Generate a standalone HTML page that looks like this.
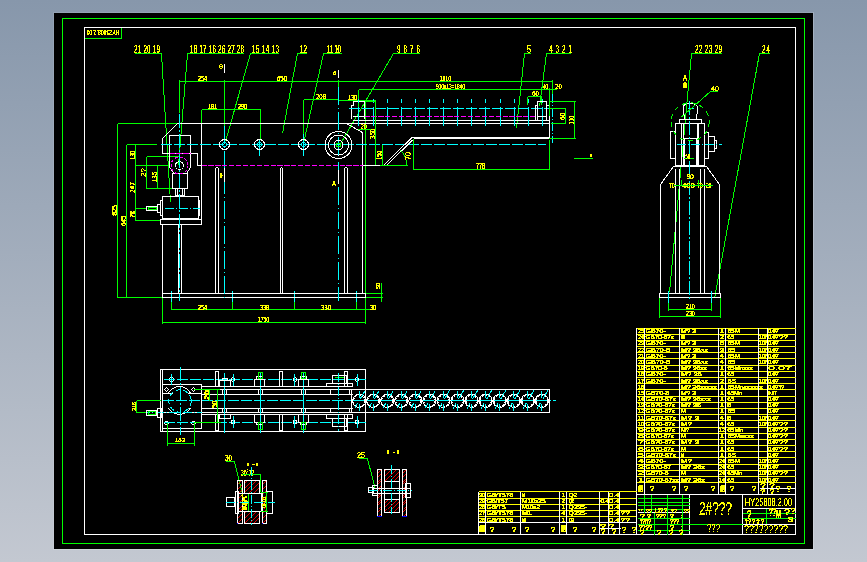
<!DOCTYPE html>
<html><head><meta charset="utf-8"><style>
html,body{margin:0;padding:0;width:867px;height:562px;overflow:hidden;background:linear-gradient(to bottom,#8797ab 0%,#c3c8d1 100%);}
svg{position:absolute;left:0;top:0;}
text{font-family:"Liberation Sans",sans-serif;filter:url(#th);} .tb text{filter:url(#th2);} .tb text.big{filter:url(#th3);}
</style></head><body>
<svg width="867" height="562" viewBox="0 0 867 562" shape-rendering="crispEdges">
<defs><filter id="th" x="-20%" y="-50%" width="140%" height="200%"><feComponentTransfer><feFuncA type="discrete" tableValues="0 0 1 1 1 1 1"/></feComponentTransfer></filter><filter id="th2" x="-20%" y="-50%" width="140%" height="200%"><feComponentTransfer><feFuncA type="discrete" tableValues="0 1 1 1 1 1 1"/></feComponentTransfer></filter><filter id="th3" x="-20%" y="-50%" width="140%" height="200%"><feComponentTransfer><feFuncA type="discrete" tableValues="0 0 0 1 1 1 1"/></feComponentTransfer></filter></defs>
<path d="M53.5 549 V12.5 H813" fill="none" stroke="#fff" stroke-opacity="0.1"/><path d="M813.5 12 V549.5 H53" fill="none" stroke="#fff" stroke-opacity="0.22"/>
<rect x="54" y="13" width="759" height="536" fill="#000"/>
<rect x="62.5" y="18.5" width="742" height="525" fill="none" stroke="#00ff00"/>
<rect x="84.5" y="27.5" width="711" height="507" fill="none" stroke="#fff"/>
<text transform="translate(119.5,30) rotate(180)" x="0" y="0" font-size="7.6" fill="#ff0" textLength="33" lengthAdjust="spacingAndGlyphs">HY25808.2.00</text>
<line x1="84.5" y1="38.5" x2="121.5" y2="38.5" stroke="#00ff00"/>
<line x1="121.5" y1="27.5" x2="121.5" y2="38.5" stroke="#00ff00"/>
<text transform="translate(134,53) scale(0.62,1)" x="0" y="0" font-size="10.15" fill="#ffff00" font-weight="normal" textLength="41.94" lengthAdjust="spacing">21 20 19</text>
<line x1="134.5" y1="53.5" x2="161.5" y2="53.5" stroke="#00ff00"/>
<line x1="161.5" y1="53.5" x2="170.5" y2="202.5" stroke="#00ff00"/>
<text transform="translate(190,53) scale(0.62,1)" x="0" y="0" font-size="10.15" fill="#ffff00" font-weight="normal" textLength="87.1" lengthAdjust="spacing">18 17 16 26 27 28</text>
<line x1="187.5" y1="53.5" x2="243.5" y2="53.5" stroke="#00ff00"/>
<line x1="187.5" y1="53.5" x2="178.5" y2="165.5" stroke="#00ff00"/>
<text transform="translate(252,53) scale(0.62,1)" x="0" y="0" font-size="10.15" fill="#ffff00" font-weight="normal" textLength="43.55" lengthAdjust="spacing">15 14 13</text>
<line x1="250.5" y1="53.5" x2="278.5" y2="53.5" stroke="#00ff00"/>
<line x1="250.5" y1="53.5" x2="225.5" y2="141.5" stroke="#00ff00"/>
<text transform="translate(300,53) scale(0.62,1)" x="0" y="0" font-size="10.15" fill="#ffff00" font-weight="normal" textLength="11.29" lengthAdjust="spacing">12</text>
<line x1="297.5" y1="53.5" x2="306.5" y2="53.5" stroke="#00ff00"/>
<line x1="297.5" y1="53.5" x2="282.5" y2="133.5" stroke="#00ff00"/>
<text transform="translate(327,53) scale(0.62,1)" x="0" y="0" font-size="10.15" fill="#ffff00" font-weight="normal" textLength="22.58" lengthAdjust="spacing">11 10</text>
<line x1="323.5" y1="53.5" x2="341.5" y2="53.5" stroke="#00ff00"/>
<line x1="323.5" y1="53.5" x2="303.5" y2="143.5" stroke="#00ff00"/>
<text transform="translate(397,53) scale(0.62,1)" x="0" y="0" font-size="10.15" fill="#ffff00" font-weight="normal" textLength="37.1" lengthAdjust="spacing">9 8 7 6</text>
<line x1="393.5" y1="53.5" x2="419.5" y2="53.5" stroke="#00ff00"/>
<line x1="393.5" y1="53.5" x2="339.5" y2="145.5" stroke="#00ff00"/>
<text x="527" y="53" font-size="10.15" fill="#ffff00" font-weight="normal" textLength="4" lengthAdjust="spacingAndGlyphs">5</text>
<line x1="524.5" y1="53.5" x2="530.5" y2="53.5" stroke="#00ff00"/>
<line x1="524.5" y1="53.5" x2="516.5" y2="128.5" stroke="#00ff00"/>
<text transform="translate(549,53) scale(0.62,1)" x="0" y="0" font-size="10.15" fill="#ffff00" font-weight="normal" textLength="37.1" lengthAdjust="spacing">4 3 2 1</text>
<line x1="546.5" y1="53.5" x2="570.5" y2="53.5" stroke="#00ff00"/>
<line x1="546.5" y1="53.5" x2="539.5" y2="106.5" stroke="#00ff00"/>
<text transform="translate(695,53) scale(0.62,1)" x="0" y="0" font-size="10.15" fill="#ffff00" font-weight="normal" textLength="43.55" lengthAdjust="spacing">22 23 29</text>
<line x1="691.5" y1="53.5" x2="721.5" y2="53.5" stroke="#00ff00"/>
<line x1="691.5" y1="53.5" x2="669.5" y2="292.5" stroke="#00ff00"/>
<text transform="translate(762,53) scale(0.62,1)" x="0" y="0" font-size="10.15" fill="#ffff00" font-weight="normal" textLength="12.9" lengthAdjust="spacing">24</text>
<line x1="759.5" y1="53.5" x2="769.5" y2="53.5" stroke="#00ff00"/>
<line x1="759.5" y1="53.5" x2="714.5" y2="298.5" stroke="#00ff00"/>
<line x1="179.5" y1="81.5" x2="552.5" y2="81.5" stroke="#00ff00"/>
<text x="198" y="81" font-size="7.25" fill="#ffff00" font-weight="normal" textLength="9" lengthAdjust="spacingAndGlyphs">254</text>
<text x="277" y="81" font-size="7.25" fill="#ffff00" font-weight="normal" textLength="10" lengthAdjust="spacingAndGlyphs">650</text>
<text x="440" y="81" font-size="7.25" fill="#ffff00" font-weight="normal" textLength="11" lengthAdjust="spacingAndGlyphs">1610</text>
<line x1="179.5" y1="79.5" x2="179.5" y2="112.5" stroke="#00ff00"/>
<line x1="224.5" y1="79.5" x2="224.5" y2="125.5" stroke="#00ff00"/>
<line x1="338.5" y1="79.5" x2="338.5" y2="86.5" stroke="#00ff00"/>
<line x1="552.5" y1="79.5" x2="552.5" y2="93.5" stroke="#00ff00"/>
<line x1="358.5" y1="89.5" x2="556.5" y2="89.5" stroke="#00ff00"/>
<line x1="358.5" y1="89.5" x2="358.5" y2="125.5" stroke="#00ff00"/>
<text x="436" y="89" font-size="7.25" fill="#ffff00" font-weight="normal" textLength="29" lengthAdjust="spacingAndGlyphs">910x13=1840</text>
<text x="543" y="89" font-size="7.25" fill="#ffff00" font-weight="normal" textLength="5" lengthAdjust="spacingAndGlyphs">40</text>
<text x="555" y="89" font-size="7.25" fill="#ffff00" font-weight="normal" textLength="7" lengthAdjust="spacingAndGlyphs">20</text>
<line x1="303.5" y1="99.5" x2="338.5" y2="99.5" stroke="#00ff00"/>
<line x1="303.5" y1="99.5" x2="303.5" y2="143.5" stroke="#00ff00"/>
<text x="316" y="99" font-size="7.25" fill="#ffff00" font-weight="normal" textLength="10" lengthAdjust="spacingAndGlyphs">208</text>
<line x1="338.5" y1="100.5" x2="375.5" y2="100.5" stroke="#00ff00"/>
<text x="348" y="100" font-size="7.25" fill="#ffff00" font-weight="normal" textLength="9" lengthAdjust="spacingAndGlyphs">130</text>
<line x1="201.5" y1="109.5" x2="260.5" y2="109.5" stroke="#00ff00"/>
<line x1="201.5" y1="109.5" x2="201.5" y2="123.5" stroke="#00ff00"/>
<line x1="260.5" y1="109.5" x2="260.5" y2="138.5" stroke="#00ff00"/>
<text x="208" y="109" font-size="7.25" fill="#ffff00" font-weight="normal" textLength="9" lengthAdjust="spacingAndGlyphs">181</text>
<text x="238" y="109" font-size="7.25" fill="#ffff00" font-weight="normal" textLength="9" lengthAdjust="spacingAndGlyphs">290</text>
<line x1="527.5" y1="96.5" x2="541.5" y2="96.5" stroke="#00ff00"/>
<line x1="527.5" y1="96.5" x2="527.5" y2="104.5" stroke="#00ff00"/>
<line x1="541.5" y1="96.5" x2="541.5" y2="104.5" stroke="#00ff00"/>
<text x="532" y="96" font-size="7.25" fill="#ffff00" font-weight="normal" textLength="7" lengthAdjust="spacingAndGlyphs">60</text>
<line x1="224.5" y1="63.5" x2="224.5" y2="72.5" stroke="#ffffff"/>
<text x="219" y="69" font-size="7.25" fill="#ffff00" font-weight="normal" textLength="4" lengthAdjust="spacingAndGlyphs">θ</text>
<line x1="338.5" y1="69.5" x2="338.5" y2="77.5" stroke="#ffffff"/>
<text x="333" y="75" font-size="5.8" fill="#ffff00" font-weight="normal" textLength="3" lengthAdjust="spacingAndGlyphs">θ</text>
<line x1="117.5" y1="123.5" x2="117.5" y2="297.5" stroke="#00ff00"/>
<text transform="translate(117,215.5) rotate(-90)" x="0" y="0" font-size="7.25" fill="#ffff00" font-weight="normal" textLength="10.5" lengthAdjust="spacingAndGlyphs">825</text>
<line x1="126.5" y1="144.5" x2="126.5" y2="297.5" stroke="#00ff00"/>
<text transform="translate(126,225.6) rotate(-90)" x="0" y="0" font-size="6.67" fill="#ffff00" font-weight="normal" textLength="9.9" lengthAdjust="spacingAndGlyphs">645</text>
<line x1="135.5" y1="144.5" x2="135.5" y2="220.5" stroke="#00ff00"/>
<text transform="translate(134.8,159.7) rotate(-90)" x="0" y="0" font-size="6.52" fill="#ffff00" font-weight="normal" textLength="9" lengthAdjust="spacingAndGlyphs">130</text>
<text transform="translate(134.8,192.7) rotate(-90)" x="0" y="0" font-size="6.52" fill="#ffff00" font-weight="normal" textLength="10.7" lengthAdjust="spacingAndGlyphs">247</text>
<text transform="translate(134.8,217.6) rotate(-90)" x="0" y="0" font-size="6.52" fill="#ffff00" font-weight="normal" textLength="6.6" lengthAdjust="spacingAndGlyphs">78</text>
<line x1="117.5" y1="123.5" x2="177.5" y2="123.5" stroke="#00ff00"/>
<line x1="126.5" y1="144.5" x2="156.5" y2="144.5" stroke="#00ff00"/>
<line x1="135.5" y1="165.5" x2="168.5" y2="165.5" stroke="#00ff00"/>
<line x1="135.5" y1="208.5" x2="146.5" y2="208.5" stroke="#00ff00"/>
<line x1="135.5" y1="220.5" x2="160.5" y2="220.5" stroke="#00ff00"/>
<line x1="116.5" y1="297.5" x2="162.5" y2="297.5" stroke="#00ff00"/>
<line x1="146.5" y1="156.5" x2="146.5" y2="188.5" stroke="#00ff00"/>
<text transform="translate(146,177) rotate(-90)" x="0" y="0" font-size="7.25" fill="#ffff00" font-weight="normal" textLength="9" lengthAdjust="spacingAndGlyphs">2?</text>
<line x1="157.5" y1="165.5" x2="157.5" y2="188.5" stroke="#00ff00"/>
<text transform="translate(157,182) rotate(-90)" x="0" y="0" font-size="7.25" fill="#ffff00" font-weight="normal" textLength="10" lengthAdjust="spacingAndGlyphs">135</text>
<line x1="146.5" y1="156.5" x2="178.5" y2="156.5" stroke="#00ff00"/>
<line x1="146.5" y1="188.5" x2="178.5" y2="188.5" stroke="#00ff00"/>
<line x1="171.5" y1="290.5" x2="171.5" y2="301.5" stroke="#00ffff"/>
<line x1="171.5" y1="301.5" x2="171.5" y2="309.5" stroke="#00ff00"/>
<line x1="232.5" y1="290.5" x2="232.5" y2="301.5" stroke="#00ffff"/>
<line x1="232.5" y1="301.5" x2="232.5" y2="309.5" stroke="#00ff00"/>
<line x1="294.5" y1="290.5" x2="294.5" y2="301.5" stroke="#00ffff"/>
<line x1="294.5" y1="301.5" x2="294.5" y2="309.5" stroke="#00ff00"/>
<line x1="356.5" y1="290.5" x2="356.5" y2="301.5" stroke="#00ffff"/>
<line x1="356.5" y1="301.5" x2="356.5" y2="309.5" stroke="#00ff00"/>
<line x1="171.5" y1="309.5" x2="375.5" y2="309.5" stroke="#00ff00"/>
<text x="198" y="310" font-size="7.25" fill="#ffff00" font-weight="normal" textLength="9" lengthAdjust="spacingAndGlyphs">254</text>
<text x="260" y="310" font-size="7.25" fill="#ffff00" font-weight="normal" textLength="9" lengthAdjust="spacingAndGlyphs">338</text>
<text x="321" y="310" font-size="7.25" fill="#ffff00" font-weight="normal" textLength="10" lengthAdjust="spacingAndGlyphs">330</text>
<text x="370" y="310" font-size="7.25" fill="#ffff00" font-weight="normal" textLength="6" lengthAdjust="spacingAndGlyphs">30</text>
<line x1="162.5" y1="297.5" x2="162.5" y2="323.5" stroke="#00ff00"/>
<line x1="162.5" y1="322.5" x2="365.5" y2="322.5" stroke="#00ff00"/>
<text x="258" y="322" font-size="7.25" fill="#ffff00" font-weight="normal" textLength="11" lengthAdjust="spacingAndGlyphs">1750</text>
<line x1="365.5" y1="100.5" x2="365.5" y2="323.5" stroke="#00ff00"/>
<line x1="381.5" y1="282.5" x2="381.5" y2="301.5" stroke="#00ff00"/>
<text transform="translate(380,289) rotate(-90)" x="0" y="0" font-size="5.8" fill="#ffff00" font-weight="normal" textLength="6" lengthAdjust="spacingAndGlyphs">50</text>
<line x1="365.5" y1="293.5" x2="382.5" y2="293.5" stroke="#00ff00"/>
<line x1="365.5" y1="297.5" x2="382.5" y2="297.5" stroke="#00ff00"/>
<polyline points="177.5,123.5 346.5,123.5 362.5,132.5 362.5,293.5" fill="none" stroke="#ffffff"/>
<polyline points="177.5,123.5 162.5,138.5 162.5,153.5 197.5,153.5 197.5,165.5 201.5,165.5" fill="none" stroke="#ffffff"/>
<line x1="201.5" y1="123.5" x2="201.5" y2="220.5" stroke="#ffffff"/>
<polyline points="215.5,293.5 215.5,168.5 216.5,167.5 217.5,167.5 218.5,168.5 218.5,293.5" fill="none" stroke="#ffffff"/>
<polyline points="280.5,293.5 280.5,168.5 281.5,167.5 281.5,167.5 282.5,168.5 282.5,293.5" fill="none" stroke="#ffffff"/>
<polyline points="344.5,293.5 344.5,168.5 345.5,167.5 346.5,167.5 347.5,168.5 347.5,293.5" fill="none" stroke="#ffffff"/>
<polyline points="162.5,293.5 365.5,293.5 365.5,297.5 162.5,297.5 162.5,293.5" fill="none" stroke="#ffffff"/>
<line x1="162.5" y1="224.5" x2="162.5" y2="293.5" stroke="#ffffff"/>
<line x1="181.5" y1="224.5" x2="181.5" y2="293.5" stroke="#ffffff"/>
<line x1="178.5" y1="224.5" x2="178.5" y2="293.5" stroke="#ffffff"/>
<polyline points="169.5,167.5 169.5,135.5 190.5,135.5 190.5,167.5" fill="none" stroke="#ffffff"/>
<polyline points="169.5,167.5 174.5,173.5 186.5,173.5 190.5,167.5" fill="none" stroke="#ffffff"/>
<rect x="172.5" y="173.5" width="15" height="15" fill="none" stroke="#ffffff"/>
<rect x="175.5" y="188.5" width="9" height="7" fill="none" stroke="#ffffff"/>
<line x1="177.5" y1="188.5" x2="177.5" y2="195.5" stroke="#ffffff"/>
<line x1="182.5" y1="188.5" x2="182.5" y2="195.5" stroke="#ffffff"/>
<circle cx="179.5" cy="165.5" r="4" fill="none" stroke="#ffffff"/>
<circle cx="179.5" cy="165.5" r="8.5" fill="none" stroke="#ff00ff" stroke-dasharray="3,2"/>
<rect x="162.5" y="196.5" width="36" height="22" fill="none" stroke="#ffffff"/>
<rect x="198.5" y="200.5" width="1" height="15" fill="none" stroke="#ffffff"/>
<rect x="160.5" y="200.5" width="2" height="15" fill="none" stroke="#ffffff"/>
<rect x="157.5" y="204.5" width="3" height="8" fill="none" stroke="#ffffff"/>
<rect x="146.5" y="206.5" width="11" height="4" fill="none" stroke="#ffffff"/>
<rect x="148.5" y="207.5" width="8" height="2" fill="none" stroke="#00ff00"/>
<rect x="160.5" y="219.5" width="41" height="5" fill="none" stroke="#ffffff"/>
<line x1="162.5" y1="218.5" x2="198.5" y2="218.5" stroke="#ffffff"/>
<line x1="164.5" y1="208.5" x2="199.5" y2="208.5" stroke="#00ffff" stroke-dasharray="9,2,1,2"/>
<line x1="179.5" y1="113.5" x2="179.5" y2="300.5" stroke="#00ffff" stroke-dasharray="14,2,2,2"/>
<line x1="160.5" y1="144.5" x2="545.5" y2="144.5" stroke="#00ffff" stroke-dasharray="11,2"/>
<line x1="224.5" y1="125.5" x2="224.5" y2="300.5" stroke="#00ffff" stroke-dasharray="18,3,1,3"/>
<line x1="338.5" y1="86.5" x2="338.5" y2="300.5" stroke="#00ffff" stroke-dasharray="18,3,1,3"/>
<line x1="259.5" y1="138.5" x2="259.5" y2="155.5" stroke="#00ffff"/>
<line x1="303.5" y1="133.5" x2="303.5" y2="155.5" stroke="#00ffff"/>
<line x1="169.5" y1="153.5" x2="190.5" y2="153.5" stroke="#ff00ff" stroke-dasharray="5.2,1.7"/>
<line x1="201.5" y1="165.5" x2="362.5" y2="165.5" stroke="#ff00ff" stroke-dasharray="5.2,1.7"/>
<circle cx="224.5" cy="144.5" r="5" fill="none" stroke="#ffffff"/>
<circle cx="224.5" cy="144.5" r="2" fill="none" stroke="#00ffff"/>
<circle cx="259.5" cy="144.5" r="5" fill="none" stroke="#ffffff"/>
<circle cx="259.5" cy="144.5" r="2" fill="none" stroke="#00ffff"/>
<circle cx="303.5" cy="144.5" r="5" fill="none" stroke="#ffffff"/>
<circle cx="303.5" cy="144.5" r="2" fill="none" stroke="#00ffff"/>
<circle cx="338.5" cy="145" r="13.5" fill="none" stroke="#ffffff"/>
<circle cx="338.5" cy="145" r="10" fill="none" stroke="#ffffff"/>
<circle cx="338.5" cy="145" r="4.5" fill="none" stroke="#ffffff"/>
<circle cx="338.5" cy="145" r="2" fill="none" stroke="#00ff00"/>
<line x1="338.5" y1="169.5" x2="338.5" y2="183.5" stroke="#ffffff"/>
<text x="332" y="185.6" font-size="6.67" fill="#ffff00" font-weight="normal" textLength="4" lengthAdjust="spacingAndGlyphs">A</text>
<line x1="224.5" y1="167.5" x2="224.5" y2="181.5" stroke="#ffffff"/>
<text x="219.4" y="178.3" font-size="6.82" fill="#ffff00" font-weight="normal" textLength="3.1" lengthAdjust="spacingAndGlyphs">θ</text>
<polyline points="351.9,119 351.9,105.5 353.3,105.5 353.3,101.9 364.7,101.9 364.7,119" fill="none" stroke="#ffffff"/>
<line x1="353.3" y1="116.5" x2="364.7" y2="116.5" stroke="#ffffff"/>
<line x1="352.5" y1="120.5" x2="549.5" y2="120.5" stroke="#ffffff"/>
<line x1="346.5" y1="123.5" x2="549.5" y2="123.5" stroke="#ffffff"/>
<line x1="348.5" y1="108.5" x2="552.5" y2="108.5" stroke="#00ffff" stroke-dasharray="11,2"/>
<line x1="358.5" y1="98.5" x2="358.5" y2="103.3" stroke="#00ffff"/>
<line x1="358.5" y1="106.5" x2="358.5" y2="125.5" stroke="#00ffff"/>
<line x1="373.5" y1="98.5" x2="373.5" y2="103.3" stroke="#00ffff"/>
<line x1="373.5" y1="106.5" x2="373.5" y2="125.5" stroke="#00ffff"/>
<line x1="387.5" y1="98.5" x2="387.5" y2="103.3" stroke="#00ffff"/>
<line x1="387.5" y1="106.5" x2="387.5" y2="125.5" stroke="#00ffff"/>
<line x1="401.5" y1="98.5" x2="401.5" y2="103.3" stroke="#00ffff"/>
<line x1="401.5" y1="106.5" x2="401.5" y2="125.5" stroke="#00ffff"/>
<line x1="415.5" y1="98.5" x2="415.5" y2="103.3" stroke="#00ffff"/>
<line x1="415.5" y1="106.5" x2="415.5" y2="125.5" stroke="#00ffff"/>
<line x1="429.5" y1="98.5" x2="429.5" y2="103.3" stroke="#00ffff"/>
<line x1="429.5" y1="106.5" x2="429.5" y2="125.5" stroke="#00ffff"/>
<line x1="443.5" y1="98.5" x2="443.5" y2="103.3" stroke="#00ffff"/>
<line x1="443.5" y1="106.5" x2="443.5" y2="125.5" stroke="#00ffff"/>
<line x1="457.5" y1="98.5" x2="457.5" y2="103.3" stroke="#00ffff"/>
<line x1="457.5" y1="106.5" x2="457.5" y2="125.5" stroke="#00ffff"/>
<line x1="471.5" y1="98.5" x2="471.5" y2="103.3" stroke="#00ffff"/>
<line x1="471.5" y1="106.5" x2="471.5" y2="125.5" stroke="#00ffff"/>
<line x1="485.5" y1="98.5" x2="485.5" y2="103.3" stroke="#00ffff"/>
<line x1="485.5" y1="106.5" x2="485.5" y2="125.5" stroke="#00ffff"/>
<line x1="500.5" y1="98.5" x2="500.5" y2="103.3" stroke="#00ffff"/>
<line x1="500.5" y1="106.5" x2="500.5" y2="125.5" stroke="#00ffff"/>
<line x1="514.5" y1="98.5" x2="514.5" y2="103.3" stroke="#00ffff"/>
<line x1="514.5" y1="106.5" x2="514.5" y2="125.5" stroke="#00ffff"/>
<line x1="528.5" y1="98.5" x2="528.5" y2="103.3" stroke="#00ffff"/>
<line x1="528.5" y1="106.5" x2="528.5" y2="125.5" stroke="#00ffff"/>
<line x1="542.5" y1="98.5" x2="542.5" y2="103.3" stroke="#00ffff"/>
<line x1="542.5" y1="106.5" x2="542.5" y2="125.5" stroke="#00ffff"/>
<line x1="364.5" y1="116.5" x2="535.5" y2="116.5" stroke="#ff00ff" stroke-dasharray="5.2,1.7"/>
<line x1="413.5" y1="138.5" x2="548.5" y2="138.5" stroke="#ffffff"/>
<line x1="549.5" y1="123.5" x2="549.5" y2="136.5" stroke="#ffffff"/>
<line x1="383.5" y1="165.3" x2="412" y2="137.5" stroke="#ffffff"/>
<line x1="386.5" y1="165.3" x2="414.5" y2="138.3" stroke="#ffffff"/>
<line x1="413.5" y1="138.9" x2="413.5" y2="170" stroke="#00ff00"/>
<line x1="413.5" y1="169.5" x2="550" y2="169.5" stroke="#00ff00"/>
<line x1="549.5" y1="139.5" x2="549.5" y2="169.7" stroke="#00ff00"/>
<text x="476" y="169" font-size="8.7" fill="#ffff00" font-weight="normal" textLength="9" lengthAdjust="spacingAndGlyphs">778</text>
<line x1="375.5" y1="101.9" x2="375.5" y2="165.3" stroke="#00ff00"/>
<line x1="365.5" y1="101.5" x2="376.1" y2="101.5" stroke="#00ff00"/>
<text transform="translate(375,138.7) rotate(-90)" x="0" y="0" font-size="7.25" fill="#ffff00" font-weight="normal" textLength="10.2" lengthAdjust="spacingAndGlyphs">350</text>
<line x1="382.5" y1="144.6" x2="382.5" y2="165.3" stroke="#00ff00"/>
<text transform="translate(381.6,160) rotate(-90)" x="0" y="0" font-size="6.67" fill="#ffff00" font-weight="normal" textLength="9.5" lengthAdjust="spacingAndGlyphs">150</text>
<line x1="357.5" y1="129.5" x2="370.5" y2="129.5" stroke="#00ff00"/>
<text x="360.7" y="129" font-size="7.25" fill="#ffff00" font-weight="normal" textLength="5.9" lengthAdjust="spacingAndGlyphs">20</text>
<line x1="365.5" y1="165.5" x2="408.1" y2="165.5" stroke="#00ff00"/>
<line x1="362.5" y1="165.5" x2="379.5" y2="165.5" stroke="#ffffff"/>
<path d="M 400.7 150.3 A 22.5 22.5 0 0 1 406.9 165.3" fill="none" stroke="#0f0"/>
<text transform="translate(410.8,160) rotate(-90)" x="0" y="0" font-size="8.7" fill="#ffff00" font-weight="normal" textLength="8" lengthAdjust="spacingAndGlyphs">70</text>
<line x1="412.4" y1="137.5" x2="549.5" y2="137.5" stroke="#ffffff"/>
<polyline points="535.5,119.5 535.5,105.5 537.5,105.5 537.5,101.5 546.5,101.5 546.5,105.5 549.5,105.5 549.5,119.5" fill="none" stroke="#ffffff"/>
<line x1="537.5" y1="105.5" x2="537.5" y2="119.5" stroke="#ffffff"/>
<line x1="546.5" y1="105.5" x2="546.5" y2="119.5" stroke="#ffffff"/>
<line x1="537.5" y1="116.5" x2="546.5" y2="116.5" stroke="#ffffff"/>
<line x1="549.5" y1="119.5" x2="549.5" y2="123.5" stroke="#ffffff"/>
<line x1="552.5" y1="93.5" x2="552.5" y2="142.5" stroke="#00ffff" stroke-dasharray="9,2,1,2"/>
<line x1="548.5" y1="101.5" x2="575.5" y2="101.5" stroke="#00ff00"/>
<line x1="549.5" y1="108.5" x2="565.5" y2="108.5" stroke="#00ff00"/>
<line x1="550.5" y1="123.5" x2="565.5" y2="123.5" stroke="#00ff00"/>
<line x1="548.5" y1="138.5" x2="575.5" y2="138.5" stroke="#00ff00"/>
<line x1="565.5" y1="108.5" x2="565.5" y2="123.5" stroke="#00ff00"/>
<line x1="574.5" y1="101.5" x2="574.5" y2="138.3" stroke="#00ff00"/>
<line x1="549.5" y1="87.5" x2="549.5" y2="115.5" stroke="#00ff00"/>
<line x1="549.5" y1="139.5" x2="549.5" y2="169.5" stroke="#00ff00"/>
<text transform="translate(565,120) rotate(-90)" x="0" y="0" font-size="7.25" fill="#ffff00" font-weight="normal" textLength="7.3" lengthAdjust="spacingAndGlyphs">60</text>
<text transform="translate(574,124) rotate(-90)" x="0" y="0" font-size="7.25" fill="#ffff00" font-weight="normal" textLength="8" lengthAdjust="spacingAndGlyphs">130</text>
<line x1="573.5" y1="158.5" x2="593" y2="158.5" stroke="#00ff00"/>
<rect x="590" y="154" width="2" height="3" fill="#ffff00"/>
<polyline points="673.5,166.5 660.5,184.5 660.5,293.5" fill="none" stroke="#ffffff"/>
<polyline points="706.5,166.5 719.5,184.5 719.5,293.5" fill="none" stroke="#ffffff"/>
<line x1="673.5" y1="166.5" x2="706.5" y2="166.5" stroke="#ffffff"/>
<rect x="659.5" y="293.5" width="61" height="4" fill="none" stroke="#ffffff"/>
<line x1="675.5" y1="168.5" x2="675.5" y2="293.5" stroke="#ffffff"/>
<line x1="679.5" y1="168.5" x2="679.5" y2="293.5" stroke="#ffffff"/>
<line x1="700.5" y1="168.5" x2="700.5" y2="293.5" stroke="#ffffff"/>
<line x1="704.5" y1="168.5" x2="704.5" y2="293.5" stroke="#ffffff"/>
<rect x="675.5" y="123.5" width="29" height="42" fill="none" stroke="#ffffff"/>
<rect x="679.5" y="119.5" width="22" height="4" fill="none" stroke="#ffffff"/>
<line x1="681.5" y1="123.7" x2="681.5" y2="166.5" stroke="#ffffff"/>
<line x1="683.5" y1="123.7" x2="683.5" y2="166.5" stroke="#ffffff"/>
<line x1="697.5" y1="123.7" x2="697.5" y2="166.5" stroke="#ffffff"/>
<line x1="698.5" y1="123.7" x2="698.5" y2="166.5" stroke="#ffffff"/>
<polyline points="684.3,119.7 684.3,114.8 683,113.5 683,106.5 685,104.5 687.4,103.2 692.8,103.2 695.2,104.5 697.2,106.5 697.2,113.5 696.3,114.8 696.3,119.7" fill="none" stroke="#ffffff"/>
<line x1="687.5" y1="108.5" x2="694.1" y2="108.5" stroke="#00ffff"/>
<rect x="670.5" y="131.5" width="5" height="27" fill="none" stroke="#ffffff"/>
<rect x="704.5" y="132.5" width="4" height="26" fill="none" stroke="#ffffff"/>
<rect x="708.5" y="136.5" width="6" height="15" fill="none" stroke="#ffffff"/>
<rect x="714.5" y="140.5" width="2" height="8" fill="none" stroke="#ffffff"/>
<rect x="684.5" y="138.5" width="12" height="27" fill="none" stroke="#ffffff"/>
<line x1="676.5" y1="144.5" x2="721.5" y2="144.5" stroke="#00ffff" stroke-dasharray="9,2,1,2"/>
<line x1="689.5" y1="100.5" x2="689.5" y2="300.5" stroke="#00ffff" stroke-dasharray="14,2,2,2"/>
<circle cx="690.1" cy="121.9" r="19.1" fill="none" stroke="#00ff00" stroke-dasharray="5,4"/>
<line x1="711" y1="91.1" x2="681.5" y2="117" stroke="#00ff00"/>
<line x1="711" y1="91.5" x2="718.3" y2="91.5" stroke="#00ff00"/>
<text x="711" y="91" font-size="6.52" fill="#ffff00" font-weight="normal" textLength="8" lengthAdjust="spacingAndGlyphs">40</text>
<text x="683" y="81" font-size="8.7" fill="#ffff00" font-weight="normal" textLength="4" lengthAdjust="spacingAndGlyphs">A</text>
<rect x="683" y="83" width="4" height="5" fill="#ffff00"/>
<rect x="684" y="82" width="2" height="1" fill="#ffff00"/>
<text x="686.4" y="179" font-size="6.67" fill="#ffff00" font-weight="normal" textLength="7.3" lengthAdjust="spacingAndGlyphs">90</text>
<text x="668.7" y="188" font-size="6.81" fill="#ffff00" font-weight="normal" textLength="6.3" lengthAdjust="spacingAndGlyphs">70</text>
<text x="682" y="188" font-size="6.81" fill="#ffff00" font-weight="normal" textLength="12.6" lengthAdjust="spacingAndGlyphs">400</text>
<text x="697" y="188" font-size="6.81" fill="#ffff00" font-weight="normal" textLength="5.6" lengthAdjust="spacingAndGlyphs">70</text>
<text x="706" y="188" font-size="6.81" fill="#ffff00" font-weight="normal" textLength="5.4" lengthAdjust="spacingAndGlyphs">20</text>
<line x1="681.5" y1="179.5" x2="681.5" y2="185.5" stroke="#00ff00"/>
<line x1="698.5" y1="179.5" x2="698.5" y2="185.5" stroke="#00ff00"/>
<line x1="683.5" y1="158.5" x2="694.1" y2="158.5" stroke="#00ff00"/>
<text x="685.6" y="159.4" font-size="6.38" fill="#ffff00" font-weight="normal" textLength="4.4" lengthAdjust="spacingAndGlyphs">50</text>
<line x1="673.5" y1="185.5" x2="712.5" y2="185.5" stroke="#00ff00"/>
<line x1="668.5" y1="309.5" x2="711.5" y2="309.5" stroke="#00ff00"/>
<line x1="659.5" y1="316.5" x2="720.5" y2="316.5" stroke="#00ff00"/>
<line x1="659.5" y1="297.5" x2="659.5" y2="317.5" stroke="#00ff00"/>
<line x1="720.5" y1="297.5" x2="720.5" y2="317.5" stroke="#00ff00"/>
<line x1="668.5" y1="303.1" x2="668.5" y2="310.5" stroke="#00ff00"/>
<line x1="711.5" y1="303.1" x2="711.5" y2="310.5" stroke="#00ff00"/>
<line x1="668.5" y1="290.5" x2="668.5" y2="303.1" stroke="#00ffff"/>
<line x1="711.5" y1="290.5" x2="711.5" y2="303.1" stroke="#00ffff"/>
<text x="686" y="308.7" font-size="6.81" fill="#ffff00" font-weight="normal" textLength="8.8" lengthAdjust="spacingAndGlyphs">210</text>
<text x="686" y="315.6" font-size="6.67" fill="#ffff00" font-weight="normal" textLength="8.8" lengthAdjust="spacingAndGlyphs">230</text>
<rect x="160.5" y="369.5" width="205" height="62" fill="none" stroke="#ffffff"/>
<line x1="162.5" y1="369.5" x2="162.5" y2="431.5" stroke="#ffffff"/>
<rect x="162.5" y="384.5" width="39" height="44" fill="none" stroke="#ffffff"/>
<line x1="162.5" y1="393.5" x2="172.5" y2="393.5" stroke="#ffffff"/>
<line x1="187.5" y1="393.5" x2="201.5" y2="393.5" stroke="#ffffff"/>
<line x1="162.5" y1="412.5" x2="172.5" y2="412.5" stroke="#ffffff"/>
<line x1="187.5" y1="412.5" x2="201.5" y2="412.5" stroke="#ffffff"/>
<path d="M 168.5 393 A 12.7 12.7 0 0 1 190.5 393 M 168.5 408 A 12.7 12.7 0 0 0 190.5 408" fill="none" stroke="#fff"/>
<circle cx="180" cy="401" r="11.2" fill="none" stroke="#00ffff" stroke-dasharray="5,3"/>
<circle cx="166.5" cy="389.5" r="1.8" fill="none" stroke="#ffffff"/>
<circle cx="193.5" cy="389.5" r="1.8" fill="none" stroke="#ffffff"/>
<circle cx="166.5" cy="423" r="1.8" fill="none" stroke="#ffffff"/>
<circle cx="193.5" cy="423" r="1.8" fill="none" stroke="#ffffff"/>
<circle cx="171.5" cy="379.5" r="2" fill="none" stroke="#ffffff"/>
<line x1="171.5" y1="373.5" x2="171.5" y2="384.5" stroke="#00ffff"/>
<line x1="163.5" y1="379.5" x2="365.5" y2="379.5" stroke="#00ffff" stroke-dasharray="11,2"/>
<line x1="163.5" y1="422.5" x2="365.5" y2="422.5" stroke="#00ffff" stroke-dasharray="11,2"/>
<line x1="136.5" y1="400.5" x2="555.5" y2="400.5" stroke="#00ffff" stroke-dasharray="11,2"/>
<line x1="140.5" y1="412.5" x2="201.5" y2="412.5" stroke="#00ffff" stroke-dasharray="9,2,1,2"/>
<line x1="180.5" y1="366.5" x2="180.5" y2="434.5" stroke="#00ffff" stroke-dasharray="14,2,2,2"/>
<line x1="201.5" y1="386.5" x2="352.5" y2="386.5" stroke="#ffffff"/>
<line x1="201.5" y1="389.5" x2="352.5" y2="389.5" stroke="#ffffff"/>
<line x1="201.5" y1="394.5" x2="352.5" y2="394.5" stroke="#ffffff"/>
<line x1="201.5" y1="408.5" x2="352.5" y2="408.5" stroke="#ffffff"/>
<line x1="201.5" y1="412.5" x2="352.5" y2="412.5" stroke="#ffffff"/>
<line x1="201.5" y1="414.5" x2="352.5" y2="414.5" stroke="#ffffff"/>
<rect x="215.5" y="371.5" width="3" height="15" fill="none" stroke="#ffffff"/>
<rect x="215.5" y="414.5" width="3" height="16" fill="none" stroke="#ffffff"/>
<rect x="279.5" y="371.5" width="3" height="15" fill="none" stroke="#ffffff"/>
<rect x="279.5" y="414.5" width="3" height="16" fill="none" stroke="#ffffff"/>
<rect x="344.5" y="371.5" width="3" height="15" fill="none" stroke="#ffffff"/>
<rect x="344.5" y="414.5" width="3" height="16" fill="none" stroke="#ffffff"/>
<rect x="222.5" y="389.5" width="4" height="5" fill="none" stroke="#ffffff"/>
<rect x="222.5" y="408.5" width="4" height="4" fill="none" stroke="#ffffff"/>
<line x1="224.5" y1="372.5" x2="224.5" y2="432.5" stroke="#00ffff"/>
<rect x="258.5" y="389.5" width="4" height="5" fill="none" stroke="#ffffff"/>
<rect x="258.5" y="408.5" width="4" height="4" fill="none" stroke="#ffffff"/>
<line x1="260.5" y1="372.5" x2="260.5" y2="432.5" stroke="#00ffff"/>
<rect x="301.5" y="389.5" width="4" height="5" fill="none" stroke="#ffffff"/>
<rect x="301.5" y="408.5" width="4" height="4" fill="none" stroke="#ffffff"/>
<line x1="303.5" y1="372.5" x2="303.5" y2="432.5" stroke="#00ffff"/>
<rect x="219.5" y="380.5" width="11" height="6" fill="none" stroke="#ffffff"/>
<rect x="222.5" y="378.5" width="5" height="2" fill="none" stroke="#ffffff"/>
<rect x="219.5" y="414.5" width="11" height="4" fill="none" stroke="#ffffff"/>
<rect x="254.5" y="379.5" width="10" height="7" fill="none" stroke="#ffffff"/>
<rect x="256.5" y="376.5" width="6" height="3" fill="none" stroke="#ffffff"/>
<rect x="254.5" y="414.5" width="10" height="8" fill="none" stroke="#ffffff"/>
<rect x="256.5" y="422.5" width="6" height="2" fill="none" stroke="#ffffff"/>
<rect x="258.5" y="372.5" width="4" height="6" fill="none" stroke="#00ff00"/>
<rect x="258.5" y="422.5" width="4" height="7" fill="none" stroke="#00ff00"/>
<rect x="298.5" y="379.5" width="10" height="7" fill="none" stroke="#ffffff"/>
<rect x="300.5" y="376.5" width="6" height="3" fill="none" stroke="#ffffff"/>
<rect x="298.5" y="414.5" width="10" height="8" fill="none" stroke="#ffffff"/>
<rect x="300.5" y="422.5" width="6" height="2" fill="none" stroke="#ffffff"/>
<rect x="301.5" y="372.5" width="4" height="6" fill="none" stroke="#00ff00"/>
<rect x="301.5" y="422.5" width="4" height="7" fill="none" stroke="#00ff00"/>
<circle cx="233.1" cy="379.5" r="1.8" fill="none" stroke="#ffffff"/>
<line x1="233.5" y1="373.5" x2="233.5" y2="385.5" stroke="#00ffff"/>
<circle cx="233.1" cy="422" r="1.8" fill="none" stroke="#ffffff"/>
<line x1="233.5" y1="416" x2="233.5" y2="428" stroke="#00ffff"/>
<circle cx="294.9" cy="379.5" r="1.8" fill="none" stroke="#ffffff"/>
<line x1="294.5" y1="373.5" x2="294.5" y2="385.5" stroke="#00ffff"/>
<circle cx="294.9" cy="422" r="1.8" fill="none" stroke="#ffffff"/>
<line x1="294.5" y1="416" x2="294.5" y2="428" stroke="#00ffff"/>
<circle cx="357.1" cy="379.5" r="1.8" fill="none" stroke="#ffffff"/>
<line x1="357.5" y1="373.5" x2="357.5" y2="385.5" stroke="#00ffff"/>
<circle cx="357.1" cy="422" r="1.8" fill="none" stroke="#ffffff"/>
<line x1="357.5" y1="416" x2="357.5" y2="428" stroke="#00ffff"/>
<rect x="332.5" y="375.5" width="14" height="8" fill="none" stroke="#ffffff"/>
<rect x="326.5" y="383.5" width="26" height="3" fill="none" stroke="#ffffff"/>
<line x1="334.5" y1="377.5" x2="343.5" y2="377.5" stroke="#00ff00"/>
<rect x="330.5" y="389.5" width="19" height="5" fill="none" stroke="#ffffff"/>
<rect x="332.5" y="418.5" width="14" height="8" fill="none" stroke="#ffffff"/>
<rect x="326.5" y="414.5" width="26" height="4" fill="none" stroke="#ffffff"/>
<rect x="330.5" y="408.5" width="19" height="4" fill="none" stroke="#ffffff"/>
<line x1="338.5" y1="372.5" x2="338.5" y2="430.5" stroke="#00ffff" stroke-dasharray="9,2,1,2"/>
<rect x="351.5" y="389.5" width="198" height="23" fill="none" stroke="#ffffff"/>
<circle cx="359.2" cy="400.8" r="6.6" fill="none" stroke="#ffffff"/>
<circle cx="359.2" cy="400.8" r="5.6" fill="none" stroke="#ffffff" stroke-dasharray="2,1.6"/>
<line x1="359.5" y1="390.5" x2="359.5" y2="398" stroke="#00ffff"/>
<line x1="359.5" y1="403.5" x2="359.5" y2="411" stroke="#00ffff"/>
<line x1="354.2" y1="400.5" x2="364.2" y2="400.5" stroke="#00ffff"/>
<line x1="365.2" y1="390.5" x2="360.2" y2="399" stroke="#00ffff"/>
<line x1="357.7" y1="403" x2="354.7" y2="408.5" stroke="#00ffff"/>
<circle cx="373.25" cy="400.8" r="6.6" fill="none" stroke="#ffffff"/>
<circle cx="373.25" cy="400.8" r="5.6" fill="none" stroke="#ffffff" stroke-dasharray="2,1.6"/>
<line x1="373.5" y1="390.5" x2="373.5" y2="398" stroke="#00ffff"/>
<line x1="373.5" y1="403.5" x2="373.5" y2="411" stroke="#00ffff"/>
<line x1="368.25" y1="400.5" x2="378.25" y2="400.5" stroke="#00ffff"/>
<line x1="379.25" y1="390.5" x2="374.25" y2="399" stroke="#00ffff"/>
<line x1="371.75" y1="403" x2="368.75" y2="408.5" stroke="#00ffff"/>
<circle cx="387.3" cy="400.8" r="6.6" fill="none" stroke="#ffffff"/>
<circle cx="387.3" cy="400.8" r="5.6" fill="none" stroke="#ffffff" stroke-dasharray="2,1.6"/>
<line x1="387.5" y1="390.5" x2="387.5" y2="398" stroke="#00ffff"/>
<line x1="387.5" y1="403.5" x2="387.5" y2="411" stroke="#00ffff"/>
<line x1="382.3" y1="400.5" x2="392.3" y2="400.5" stroke="#00ffff"/>
<line x1="393.3" y1="390.5" x2="388.3" y2="399" stroke="#00ffff"/>
<line x1="385.8" y1="403" x2="382.8" y2="408.5" stroke="#00ffff"/>
<circle cx="401.35" cy="400.8" r="6.6" fill="none" stroke="#ffffff"/>
<circle cx="401.35" cy="400.8" r="5.6" fill="none" stroke="#ffffff" stroke-dasharray="2,1.6"/>
<line x1="401.5" y1="390.5" x2="401.5" y2="398" stroke="#00ffff"/>
<line x1="401.5" y1="403.5" x2="401.5" y2="411" stroke="#00ffff"/>
<line x1="396.35" y1="400.5" x2="406.35" y2="400.5" stroke="#00ffff"/>
<line x1="407.35" y1="390.5" x2="402.35" y2="399" stroke="#00ffff"/>
<line x1="399.85" y1="403" x2="396.85" y2="408.5" stroke="#00ffff"/>
<circle cx="415.4" cy="400.8" r="6.6" fill="none" stroke="#ffffff"/>
<circle cx="415.4" cy="400.8" r="5.6" fill="none" stroke="#ffffff" stroke-dasharray="2,1.6"/>
<line x1="415.5" y1="390.5" x2="415.5" y2="398" stroke="#00ffff"/>
<line x1="415.5" y1="403.5" x2="415.5" y2="411" stroke="#00ffff"/>
<line x1="410.4" y1="400.5" x2="420.4" y2="400.5" stroke="#00ffff"/>
<line x1="421.4" y1="390.5" x2="416.4" y2="399" stroke="#00ffff"/>
<line x1="413.9" y1="403" x2="410.9" y2="408.5" stroke="#00ffff"/>
<circle cx="429.45" cy="400.8" r="6.6" fill="none" stroke="#ffffff"/>
<circle cx="429.45" cy="400.8" r="5.6" fill="none" stroke="#ffffff" stroke-dasharray="2,1.6"/>
<line x1="429.5" y1="390.5" x2="429.5" y2="398" stroke="#00ffff"/>
<line x1="429.5" y1="403.5" x2="429.5" y2="411" stroke="#00ffff"/>
<line x1="424.45" y1="400.5" x2="434.45" y2="400.5" stroke="#00ffff"/>
<line x1="435.45" y1="390.5" x2="430.45" y2="399" stroke="#00ffff"/>
<line x1="427.95" y1="403" x2="424.95" y2="408.5" stroke="#00ffff"/>
<circle cx="443.5" cy="400.8" r="6.6" fill="none" stroke="#ffffff"/>
<circle cx="443.5" cy="400.8" r="5.6" fill="none" stroke="#ffffff" stroke-dasharray="2,1.6"/>
<line x1="443.5" y1="390.5" x2="443.5" y2="398" stroke="#00ffff"/>
<line x1="443.5" y1="403.5" x2="443.5" y2="411" stroke="#00ffff"/>
<line x1="438.5" y1="400.5" x2="448.5" y2="400.5" stroke="#00ffff"/>
<line x1="449.5" y1="390.5" x2="444.5" y2="399" stroke="#00ffff"/>
<line x1="442" y1="403" x2="439" y2="408.5" stroke="#00ffff"/>
<circle cx="457.55" cy="400.8" r="6.6" fill="none" stroke="#ffffff"/>
<circle cx="457.55" cy="400.8" r="5.6" fill="none" stroke="#ffffff" stroke-dasharray="2,1.6"/>
<line x1="457.5" y1="390.5" x2="457.5" y2="398" stroke="#00ffff"/>
<line x1="457.5" y1="403.5" x2="457.5" y2="411" stroke="#00ffff"/>
<line x1="452.55" y1="400.5" x2="462.55" y2="400.5" stroke="#00ffff"/>
<line x1="463.55" y1="390.5" x2="458.55" y2="399" stroke="#00ffff"/>
<line x1="456.05" y1="403" x2="453.05" y2="408.5" stroke="#00ffff"/>
<circle cx="471.6" cy="400.8" r="6.6" fill="none" stroke="#ffffff"/>
<circle cx="471.6" cy="400.8" r="5.6" fill="none" stroke="#ffffff" stroke-dasharray="2,1.6"/>
<line x1="471.5" y1="390.5" x2="471.5" y2="398" stroke="#00ffff"/>
<line x1="471.5" y1="403.5" x2="471.5" y2="411" stroke="#00ffff"/>
<line x1="466.6" y1="400.5" x2="476.6" y2="400.5" stroke="#00ffff"/>
<line x1="477.6" y1="390.5" x2="472.6" y2="399" stroke="#00ffff"/>
<line x1="470.1" y1="403" x2="467.1" y2="408.5" stroke="#00ffff"/>
<circle cx="485.65" cy="400.8" r="6.6" fill="none" stroke="#ffffff"/>
<circle cx="485.65" cy="400.8" r="5.6" fill="none" stroke="#ffffff" stroke-dasharray="2,1.6"/>
<line x1="485.5" y1="390.5" x2="485.5" y2="398" stroke="#00ffff"/>
<line x1="485.5" y1="403.5" x2="485.5" y2="411" stroke="#00ffff"/>
<line x1="480.65" y1="400.5" x2="490.65" y2="400.5" stroke="#00ffff"/>
<line x1="491.65" y1="390.5" x2="486.65" y2="399" stroke="#00ffff"/>
<line x1="484.15" y1="403" x2="481.15" y2="408.5" stroke="#00ffff"/>
<circle cx="499.7" cy="400.8" r="6.6" fill="none" stroke="#ffffff"/>
<circle cx="499.7" cy="400.8" r="5.6" fill="none" stroke="#ffffff" stroke-dasharray="2,1.6"/>
<line x1="499.5" y1="390.5" x2="499.5" y2="398" stroke="#00ffff"/>
<line x1="499.5" y1="403.5" x2="499.5" y2="411" stroke="#00ffff"/>
<line x1="494.7" y1="400.5" x2="504.7" y2="400.5" stroke="#00ffff"/>
<line x1="505.7" y1="390.5" x2="500.7" y2="399" stroke="#00ffff"/>
<line x1="498.2" y1="403" x2="495.2" y2="408.5" stroke="#00ffff"/>
<circle cx="513.75" cy="400.8" r="6.6" fill="none" stroke="#ffffff"/>
<circle cx="513.75" cy="400.8" r="5.6" fill="none" stroke="#ffffff" stroke-dasharray="2,1.6"/>
<line x1="513.5" y1="390.5" x2="513.5" y2="398" stroke="#00ffff"/>
<line x1="513.5" y1="403.5" x2="513.5" y2="411" stroke="#00ffff"/>
<line x1="508.75" y1="400.5" x2="518.75" y2="400.5" stroke="#00ffff"/>
<line x1="519.75" y1="390.5" x2="514.75" y2="399" stroke="#00ffff"/>
<line x1="512.25" y1="403" x2="509.25" y2="408.5" stroke="#00ffff"/>
<circle cx="527.8" cy="400.8" r="6.6" fill="none" stroke="#ffffff"/>
<circle cx="527.8" cy="400.8" r="5.6" fill="none" stroke="#ffffff" stroke-dasharray="2,1.6"/>
<line x1="527.5" y1="390.5" x2="527.5" y2="398" stroke="#00ffff"/>
<line x1="527.5" y1="403.5" x2="527.5" y2="411" stroke="#00ffff"/>
<line x1="522.8" y1="400.5" x2="532.8" y2="400.5" stroke="#00ffff"/>
<line x1="533.8" y1="390.5" x2="528.8" y2="399" stroke="#00ffff"/>
<line x1="526.3" y1="403" x2="523.3" y2="408.5" stroke="#00ffff"/>
<circle cx="541.85" cy="400.8" r="6.6" fill="none" stroke="#ffffff"/>
<circle cx="541.85" cy="400.8" r="5.6" fill="none" stroke="#ffffff" stroke-dasharray="2,1.6"/>
<line x1="541.5" y1="390.5" x2="541.5" y2="398" stroke="#00ffff"/>
<line x1="541.5" y1="403.5" x2="541.5" y2="411" stroke="#00ffff"/>
<line x1="536.85" y1="400.5" x2="546.85" y2="400.5" stroke="#00ffff"/>
<line x1="547.85" y1="390.5" x2="542.85" y2="399" stroke="#00ffff"/>
<line x1="540.35" y1="403" x2="537.35" y2="408.5" stroke="#00ffff"/>
<line x1="136.5" y1="401" x2="136.5" y2="413" stroke="#00ff00"/>
<line x1="136.5" y1="400.5" x2="160.5" y2="400.5" stroke="#00ff00"/>
<line x1="136.5" y1="412.5" x2="145.5" y2="412.5" stroke="#00ff00"/>
<text transform="translate(136,411) rotate(-90)" x="0" y="0" font-size="5.8" fill="#ffff00" font-weight="normal" textLength="9" lengthAdjust="spacingAndGlyphs">316</text>
<line x1="167.1" y1="443.5" x2="194.1" y2="443.5" stroke="#00ff00"/>
<line x1="167.5" y1="423.4" x2="167.5" y2="445.5" stroke="#00ff00"/>
<line x1="194.5" y1="423.4" x2="194.5" y2="445.5" stroke="#00ff00"/>
<text x="175" y="442" font-size="5.8" fill="#ffff00" font-weight="normal" textLength="10" lengthAdjust="spacingAndGlyphs">183</text>
<line x1="194.1" y1="389.5" x2="219.5" y2="389.5" stroke="#00ff00"/>
<line x1="194.1" y1="422.5" x2="220.5" y2="422.5" stroke="#00ff00"/>
<line x1="217.5" y1="389.9" x2="217.5" y2="423" stroke="#00ff00"/>
<text transform="translate(209.5,400.4) rotate(-90)" x="0" y="0" font-size="7.97" fill="#ffff00" font-weight="normal" textLength="10.7" lengthAdjust="spacingAndGlyphs">20</text>
<line x1="209.5" y1="389.9" x2="209.5" y2="401" stroke="#00ff00"/>
<text transform="translate(217,407.6) rotate(-90)" x="0" y="0" font-size="7.25" fill="#ffff00" font-weight="normal" textLength="7.1" lengthAdjust="spacingAndGlyphs">50</text>
<rect x="146.5" y="410.5" width="10" height="5" fill="none" stroke="#ffffff"/>
<rect x="148.5" y="411.5" width="7" height="3" fill="none" stroke="#00ff00"/>
<rect x="157.5" y="408.5" width="4" height="9" fill="none" stroke="#ffffff"/>
<text x="225" y="461" font-size="8.7" fill="#ffff00" font-weight="normal" textLength="7" lengthAdjust="spacingAndGlyphs">30</text>
<line x1="225.5" y1="461.5" x2="234.5" y2="461.5" stroke="#00ff00"/>
<line x1="234.5" y1="461.5" x2="242.2" y2="492.4" stroke="#00ff00"/>
<rect x="247" y="463" width="2" height="3" fill="#ffff00"/>
<line x1="251.5" y1="464.5" x2="254.5" y2="464.5" stroke="#ffff00"/>
<rect x="256" y="463" width="2" height="3" fill="#ffff00"/>
<text x="241" y="476" font-size="8.7" fill="#ffff00" font-weight="normal" textLength="13" lengthAdjust="spacingAndGlyphs">30°??</text>
<line x1="241.5" y1="474.5" x2="260.4" y2="474.5" stroke="#00ff00"/>
<line x1="260.5" y1="474.2" x2="260.5" y2="491.9" stroke="#00ff00"/>
<clipPath id="h477"><rect x="237.5" y="480.6" width="4.699999999999989" height="43.299999999999955"/></clipPath>
<g clip-path="url(#h477)"><line x1="45.0" y1="523.9" x2="88.3" y2="480.6" stroke="#f00" stroke-width="0.9"/><line x1="49.8" y1="523.9" x2="93.1" y2="480.6" stroke="#f00" stroke-width="0.9"/><line x1="54.6" y1="523.9" x2="97.9" y2="480.6" stroke="#f00" stroke-width="0.9"/><line x1="59.4" y1="523.9" x2="102.7" y2="480.6" stroke="#f00" stroke-width="0.9"/><line x1="64.2" y1="523.9" x2="107.5" y2="480.6" stroke="#f00" stroke-width="0.9"/><line x1="69.0" y1="523.9" x2="112.3" y2="480.6" stroke="#f00" stroke-width="0.9"/><line x1="73.8" y1="523.9" x2="117.1" y2="480.6" stroke="#f00" stroke-width="0.9"/><line x1="78.6" y1="523.9" x2="121.9" y2="480.6" stroke="#f00" stroke-width="0.9"/><line x1="83.4" y1="523.9" x2="126.7" y2="480.6" stroke="#f00" stroke-width="0.9"/><line x1="88.2" y1="523.9" x2="131.5" y2="480.6" stroke="#f00" stroke-width="0.9"/><line x1="93.0" y1="523.9" x2="136.3" y2="480.6" stroke="#f00" stroke-width="0.9"/><line x1="97.8" y1="523.9" x2="141.1" y2="480.6" stroke="#f00" stroke-width="0.9"/><line x1="102.6" y1="523.9" x2="145.9" y2="480.6" stroke="#f00" stroke-width="0.9"/><line x1="107.4" y1="523.9" x2="150.7" y2="480.6" stroke="#f00" stroke-width="0.9"/><line x1="112.2" y1="523.9" x2="155.5" y2="480.6" stroke="#f00" stroke-width="0.9"/><line x1="117.0" y1="523.9" x2="160.3" y2="480.6" stroke="#f00" stroke-width="0.9"/><line x1="121.8" y1="523.9" x2="165.1" y2="480.6" stroke="#f00" stroke-width="0.9"/><line x1="126.6" y1="523.9" x2="169.9" y2="480.6" stroke="#f00" stroke-width="0.9"/><line x1="131.4" y1="523.9" x2="174.7" y2="480.6" stroke="#f00" stroke-width="0.9"/><line x1="136.2" y1="523.9" x2="179.5" y2="480.6" stroke="#f00" stroke-width="0.9"/><line x1="141.0" y1="523.9" x2="184.3" y2="480.6" stroke="#f00" stroke-width="0.9"/><line x1="145.8" y1="523.9" x2="189.1" y2="480.6" stroke="#f00" stroke-width="0.9"/><line x1="150.6" y1="523.9" x2="193.9" y2="480.6" stroke="#f00" stroke-width="0.9"/><line x1="155.4" y1="523.9" x2="198.7" y2="480.6" stroke="#f00" stroke-width="0.9"/><line x1="160.2" y1="523.9" x2="203.5" y2="480.6" stroke="#f00" stroke-width="0.9"/><line x1="165.0" y1="523.9" x2="208.3" y2="480.6" stroke="#f00" stroke-width="0.9"/><line x1="169.8" y1="523.9" x2="213.1" y2="480.6" stroke="#f00" stroke-width="0.9"/><line x1="174.6" y1="523.9" x2="217.9" y2="480.6" stroke="#f00" stroke-width="0.9"/><line x1="179.4" y1="523.9" x2="222.7" y2="480.6" stroke="#f00" stroke-width="0.9"/><line x1="184.2" y1="523.9" x2="227.5" y2="480.6" stroke="#f00" stroke-width="0.9"/><line x1="189.0" y1="523.9" x2="232.3" y2="480.6" stroke="#f00" stroke-width="0.9"/><line x1="193.8" y1="523.9" x2="237.1" y2="480.6" stroke="#f00" stroke-width="0.9"/><line x1="198.6" y1="523.9" x2="241.9" y2="480.6" stroke="#f00" stroke-width="0.9"/><line x1="203.4" y1="523.9" x2="246.7" y2="480.6" stroke="#f00" stroke-width="0.9"/><line x1="208.2" y1="523.9" x2="251.5" y2="480.6" stroke="#f00" stroke-width="0.9"/><line x1="213.0" y1="523.9" x2="256.3" y2="480.6" stroke="#f00" stroke-width="0.9"/><line x1="217.8" y1="523.9" x2="261.1" y2="480.6" stroke="#f00" stroke-width="0.9"/><line x1="222.6" y1="523.9" x2="265.9" y2="480.6" stroke="#f00" stroke-width="0.9"/><line x1="227.4" y1="523.9" x2="270.7" y2="480.6" stroke="#f00" stroke-width="0.9"/><line x1="232.2" y1="523.9" x2="275.5" y2="480.6" stroke="#f00" stroke-width="0.9"/><line x1="237.0" y1="523.9" x2="280.3" y2="480.6" stroke="#f00" stroke-width="0.9"/><line x1="241.8" y1="523.9" x2="285.1" y2="480.6" stroke="#f00" stroke-width="0.9"/><line x1="246.6" y1="523.9" x2="289.9" y2="480.6" stroke="#f00" stroke-width="0.9"/><line x1="251.4" y1="523.9" x2="294.7" y2="480.6" stroke="#f00" stroke-width="0.9"/><line x1="256.2" y1="523.9" x2="299.5" y2="480.6" stroke="#f00" stroke-width="0.9"/><line x1="261.0" y1="523.9" x2="304.3" y2="480.6" stroke="#f00" stroke-width="0.9"/><line x1="265.8" y1="523.9" x2="309.1" y2="480.6" stroke="#f00" stroke-width="0.9"/><line x1="270.6" y1="523.9" x2="313.9" y2="480.6" stroke="#f00" stroke-width="0.9"/><line x1="275.4" y1="523.9" x2="318.7" y2="480.6" stroke="#f00" stroke-width="0.9"/><line x1="280.2" y1="523.9" x2="323.5" y2="480.6" stroke="#f00" stroke-width="0.9"/><line x1="285.0" y1="523.9" x2="328.3" y2="480.6" stroke="#f00" stroke-width="0.9"/><line x1="289.8" y1="523.9" x2="333.1" y2="480.6" stroke="#f00" stroke-width="0.9"/><line x1="294.6" y1="523.9" x2="337.9" y2="480.6" stroke="#f00" stroke-width="0.9"/><line x1="299.4" y1="523.9" x2="342.7" y2="480.6" stroke="#f00" stroke-width="0.9"/><line x1="304.2" y1="523.9" x2="347.5" y2="480.6" stroke="#f00" stroke-width="0.9"/><line x1="309.0" y1="523.9" x2="352.3" y2="480.6" stroke="#f00" stroke-width="0.9"/><line x1="313.8" y1="523.9" x2="357.1" y2="480.6" stroke="#f00" stroke-width="0.9"/><line x1="318.6" y1="523.9" x2="361.9" y2="480.6" stroke="#f00" stroke-width="0.9"/><line x1="323.4" y1="523.9" x2="366.7" y2="480.6" stroke="#f00" stroke-width="0.9"/><line x1="328.2" y1="523.9" x2="371.5" y2="480.6" stroke="#f00" stroke-width="0.9"/><line x1="333.0" y1="523.9" x2="376.3" y2="480.6" stroke="#f00" stroke-width="0.9"/><line x1="337.8" y1="523.9" x2="381.1" y2="480.6" stroke="#f00" stroke-width="0.9"/><line x1="342.6" y1="523.9" x2="385.9" y2="480.6" stroke="#f00" stroke-width="0.9"/><line x1="347.4" y1="523.9" x2="390.7" y2="480.6" stroke="#f00" stroke-width="0.9"/><line x1="352.2" y1="523.9" x2="395.5" y2="480.6" stroke="#f00" stroke-width="0.9"/><line x1="357.0" y1="523.9" x2="400.3" y2="480.6" stroke="#f00" stroke-width="0.9"/><line x1="361.8" y1="523.9" x2="405.1" y2="480.6" stroke="#f00" stroke-width="0.9"/><line x1="366.6" y1="523.9" x2="409.9" y2="480.6" stroke="#f00" stroke-width="0.9"/><line x1="371.4" y1="523.9" x2="414.7" y2="480.6" stroke="#f00" stroke-width="0.9"/><line x1="376.2" y1="523.9" x2="419.5" y2="480.6" stroke="#f00" stroke-width="0.9"/><line x1="381.0" y1="523.9" x2="424.3" y2="480.6" stroke="#f00" stroke-width="0.9"/><line x1="385.8" y1="523.9" x2="429.1" y2="480.6" stroke="#f00" stroke-width="0.9"/><line x1="390.6" y1="523.9" x2="433.9" y2="480.6" stroke="#f00" stroke-width="0.9"/><line x1="395.4" y1="523.9" x2="438.7" y2="480.6" stroke="#f00" stroke-width="0.9"/><line x1="400.2" y1="523.9" x2="443.5" y2="480.6" stroke="#f00" stroke-width="0.9"/><line x1="405.0" y1="523.9" x2="448.3" y2="480.6" stroke="#f00" stroke-width="0.9"/><line x1="409.8" y1="523.9" x2="453.1" y2="480.6" stroke="#f00" stroke-width="0.9"/><line x1="414.6" y1="523.9" x2="457.9" y2="480.6" stroke="#f00" stroke-width="0.9"/><line x1="419.4" y1="523.9" x2="462.7" y2="480.6" stroke="#f00" stroke-width="0.9"/><line x1="424.2" y1="523.9" x2="467.5" y2="480.6" stroke="#f00" stroke-width="0.9"/></g>
<rect x="237.5" y="480.5" width="5" height="43" fill="none" stroke="#ffffff"/>
<clipPath id="h480"><rect x="244.4" y="480.6" width="14.900000000000006" height="12.899999999999977"/></clipPath>
<g clip-path="url(#h480)"><line x1="51.9" y1="493.5" x2="64.8" y2="480.6" stroke="#f00" stroke-width="0.9"/><line x1="56.7" y1="493.5" x2="69.6" y2="480.6" stroke="#f00" stroke-width="0.9"/><line x1="61.5" y1="493.5" x2="74.4" y2="480.6" stroke="#f00" stroke-width="0.9"/><line x1="66.3" y1="493.5" x2="79.2" y2="480.6" stroke="#f00" stroke-width="0.9"/><line x1="71.1" y1="493.5" x2="84.0" y2="480.6" stroke="#f00" stroke-width="0.9"/><line x1="75.9" y1="493.5" x2="88.8" y2="480.6" stroke="#f00" stroke-width="0.9"/><line x1="80.7" y1="493.5" x2="93.6" y2="480.6" stroke="#f00" stroke-width="0.9"/><line x1="85.5" y1="493.5" x2="98.4" y2="480.6" stroke="#f00" stroke-width="0.9"/><line x1="90.3" y1="493.5" x2="103.2" y2="480.6" stroke="#f00" stroke-width="0.9"/><line x1="95.1" y1="493.5" x2="108.0" y2="480.6" stroke="#f00" stroke-width="0.9"/><line x1="99.9" y1="493.5" x2="112.8" y2="480.6" stroke="#f00" stroke-width="0.9"/><line x1="104.7" y1="493.5" x2="117.6" y2="480.6" stroke="#f00" stroke-width="0.9"/><line x1="109.5" y1="493.5" x2="122.4" y2="480.6" stroke="#f00" stroke-width="0.9"/><line x1="114.3" y1="493.5" x2="127.2" y2="480.6" stroke="#f00" stroke-width="0.9"/><line x1="119.1" y1="493.5" x2="132.0" y2="480.6" stroke="#f00" stroke-width="0.9"/><line x1="123.9" y1="493.5" x2="136.8" y2="480.6" stroke="#f00" stroke-width="0.9"/><line x1="128.7" y1="493.5" x2="141.6" y2="480.6" stroke="#f00" stroke-width="0.9"/><line x1="133.5" y1="493.5" x2="146.4" y2="480.6" stroke="#f00" stroke-width="0.9"/><line x1="138.3" y1="493.5" x2="151.2" y2="480.6" stroke="#f00" stroke-width="0.9"/><line x1="143.1" y1="493.5" x2="156.0" y2="480.6" stroke="#f00" stroke-width="0.9"/><line x1="147.9" y1="493.5" x2="160.8" y2="480.6" stroke="#f00" stroke-width="0.9"/><line x1="152.7" y1="493.5" x2="165.6" y2="480.6" stroke="#f00" stroke-width="0.9"/><line x1="157.5" y1="493.5" x2="170.4" y2="480.6" stroke="#f00" stroke-width="0.9"/><line x1="162.3" y1="493.5" x2="175.2" y2="480.6" stroke="#f00" stroke-width="0.9"/><line x1="167.1" y1="493.5" x2="180.0" y2="480.6" stroke="#f00" stroke-width="0.9"/><line x1="171.9" y1="493.5" x2="184.8" y2="480.6" stroke="#f00" stroke-width="0.9"/><line x1="176.7" y1="493.5" x2="189.6" y2="480.6" stroke="#f00" stroke-width="0.9"/><line x1="181.5" y1="493.5" x2="194.4" y2="480.6" stroke="#f00" stroke-width="0.9"/><line x1="186.3" y1="493.5" x2="199.2" y2="480.6" stroke="#f00" stroke-width="0.9"/><line x1="191.1" y1="493.5" x2="204.0" y2="480.6" stroke="#f00" stroke-width="0.9"/><line x1="195.9" y1="493.5" x2="208.8" y2="480.6" stroke="#f00" stroke-width="0.9"/><line x1="200.7" y1="493.5" x2="213.6" y2="480.6" stroke="#f00" stroke-width="0.9"/><line x1="205.5" y1="493.5" x2="218.4" y2="480.6" stroke="#f00" stroke-width="0.9"/><line x1="210.3" y1="493.5" x2="223.2" y2="480.6" stroke="#f00" stroke-width="0.9"/><line x1="215.1" y1="493.5" x2="228.0" y2="480.6" stroke="#f00" stroke-width="0.9"/><line x1="219.9" y1="493.5" x2="232.8" y2="480.6" stroke="#f00" stroke-width="0.9"/><line x1="224.7" y1="493.5" x2="237.6" y2="480.6" stroke="#f00" stroke-width="0.9"/><line x1="229.5" y1="493.5" x2="242.4" y2="480.6" stroke="#f00" stroke-width="0.9"/><line x1="234.3" y1="493.5" x2="247.2" y2="480.6" stroke="#f00" stroke-width="0.9"/><line x1="239.1" y1="493.5" x2="252.0" y2="480.6" stroke="#f00" stroke-width="0.9"/><line x1="243.9" y1="493.5" x2="256.8" y2="480.6" stroke="#f00" stroke-width="0.9"/><line x1="248.7" y1="493.5" x2="261.6" y2="480.6" stroke="#f00" stroke-width="0.9"/><line x1="253.5" y1="493.5" x2="266.4" y2="480.6" stroke="#f00" stroke-width="0.9"/><line x1="258.3" y1="493.5" x2="271.2" y2="480.6" stroke="#f00" stroke-width="0.9"/><line x1="263.1" y1="493.5" x2="276.0" y2="480.6" stroke="#f00" stroke-width="0.9"/><line x1="267.9" y1="493.5" x2="280.8" y2="480.6" stroke="#f00" stroke-width="0.9"/><line x1="272.7" y1="493.5" x2="285.6" y2="480.6" stroke="#f00" stroke-width="0.9"/><line x1="277.5" y1="493.5" x2="290.4" y2="480.6" stroke="#f00" stroke-width="0.9"/><line x1="282.3" y1="493.5" x2="295.2" y2="480.6" stroke="#f00" stroke-width="0.9"/><line x1="287.1" y1="493.5" x2="300.0" y2="480.6" stroke="#f00" stroke-width="0.9"/><line x1="291.9" y1="493.5" x2="304.8" y2="480.6" stroke="#f00" stroke-width="0.9"/><line x1="296.7" y1="493.5" x2="309.6" y2="480.6" stroke="#f00" stroke-width="0.9"/><line x1="301.5" y1="493.5" x2="314.4" y2="480.6" stroke="#f00" stroke-width="0.9"/><line x1="306.3" y1="493.5" x2="319.2" y2="480.6" stroke="#f00" stroke-width="0.9"/><line x1="311.1" y1="493.5" x2="324.0" y2="480.6" stroke="#f00" stroke-width="0.9"/><line x1="315.9" y1="493.5" x2="328.8" y2="480.6" stroke="#f00" stroke-width="0.9"/><line x1="320.7" y1="493.5" x2="333.6" y2="480.6" stroke="#f00" stroke-width="0.9"/><line x1="325.5" y1="493.5" x2="338.4" y2="480.6" stroke="#f00" stroke-width="0.9"/><line x1="330.3" y1="493.5" x2="343.2" y2="480.6" stroke="#f00" stroke-width="0.9"/><line x1="335.1" y1="493.5" x2="348.0" y2="480.6" stroke="#f00" stroke-width="0.9"/><line x1="339.9" y1="493.5" x2="352.8" y2="480.6" stroke="#f00" stroke-width="0.9"/><line x1="344.7" y1="493.5" x2="357.6" y2="480.6" stroke="#f00" stroke-width="0.9"/><line x1="349.5" y1="493.5" x2="362.4" y2="480.6" stroke="#f00" stroke-width="0.9"/><line x1="354.3" y1="493.5" x2="367.2" y2="480.6" stroke="#f00" stroke-width="0.9"/><line x1="359.1" y1="493.5" x2="372.0" y2="480.6" stroke="#f00" stroke-width="0.9"/><line x1="363.9" y1="493.5" x2="376.8" y2="480.6" stroke="#f00" stroke-width="0.9"/><line x1="368.7" y1="493.5" x2="381.6" y2="480.6" stroke="#f00" stroke-width="0.9"/><line x1="373.5" y1="493.5" x2="386.4" y2="480.6" stroke="#f00" stroke-width="0.9"/><line x1="378.3" y1="493.5" x2="391.2" y2="480.6" stroke="#f00" stroke-width="0.9"/><line x1="383.1" y1="493.5" x2="396.0" y2="480.6" stroke="#f00" stroke-width="0.9"/><line x1="387.9" y1="493.5" x2="400.8" y2="480.6" stroke="#f00" stroke-width="0.9"/><line x1="392.7" y1="493.5" x2="405.6" y2="480.6" stroke="#f00" stroke-width="0.9"/><line x1="397.5" y1="493.5" x2="410.4" y2="480.6" stroke="#f00" stroke-width="0.9"/><line x1="402.3" y1="493.5" x2="415.2" y2="480.6" stroke="#f00" stroke-width="0.9"/><line x1="407.1" y1="493.5" x2="420.0" y2="480.6" stroke="#f00" stroke-width="0.9"/><line x1="411.9" y1="493.5" x2="424.8" y2="480.6" stroke="#f00" stroke-width="0.9"/><line x1="416.7" y1="493.5" x2="429.6" y2="480.6" stroke="#f00" stroke-width="0.9"/><line x1="421.5" y1="493.5" x2="434.4" y2="480.6" stroke="#f00" stroke-width="0.9"/><line x1="426.3" y1="493.5" x2="439.2" y2="480.6" stroke="#f00" stroke-width="0.9"/><line x1="431.1" y1="493.5" x2="444.0" y2="480.6" stroke="#f00" stroke-width="0.9"/></g>
<rect x="244.5" y="480.5" width="15" height="13" fill="none" stroke="#ffffff"/>
<clipPath id="h483"><rect x="244.4" y="511.1" width="14.900000000000006" height="12.799999999999955"/></clipPath>
<g clip-path="url(#h483)"><line x1="51.9" y1="523.9" x2="64.7" y2="511.1" stroke="#f00" stroke-width="0.9"/><line x1="56.7" y1="523.9" x2="69.5" y2="511.1" stroke="#f00" stroke-width="0.9"/><line x1="61.5" y1="523.9" x2="74.3" y2="511.1" stroke="#f00" stroke-width="0.9"/><line x1="66.3" y1="523.9" x2="79.1" y2="511.1" stroke="#f00" stroke-width="0.9"/><line x1="71.1" y1="523.9" x2="83.9" y2="511.1" stroke="#f00" stroke-width="0.9"/><line x1="75.9" y1="523.9" x2="88.7" y2="511.1" stroke="#f00" stroke-width="0.9"/><line x1="80.7" y1="523.9" x2="93.5" y2="511.1" stroke="#f00" stroke-width="0.9"/><line x1="85.5" y1="523.9" x2="98.3" y2="511.1" stroke="#f00" stroke-width="0.9"/><line x1="90.3" y1="523.9" x2="103.1" y2="511.1" stroke="#f00" stroke-width="0.9"/><line x1="95.1" y1="523.9" x2="107.9" y2="511.1" stroke="#f00" stroke-width="0.9"/><line x1="99.9" y1="523.9" x2="112.7" y2="511.1" stroke="#f00" stroke-width="0.9"/><line x1="104.7" y1="523.9" x2="117.5" y2="511.1" stroke="#f00" stroke-width="0.9"/><line x1="109.5" y1="523.9" x2="122.3" y2="511.1" stroke="#f00" stroke-width="0.9"/><line x1="114.3" y1="523.9" x2="127.1" y2="511.1" stroke="#f00" stroke-width="0.9"/><line x1="119.1" y1="523.9" x2="131.9" y2="511.1" stroke="#f00" stroke-width="0.9"/><line x1="123.9" y1="523.9" x2="136.7" y2="511.1" stroke="#f00" stroke-width="0.9"/><line x1="128.7" y1="523.9" x2="141.5" y2="511.1" stroke="#f00" stroke-width="0.9"/><line x1="133.5" y1="523.9" x2="146.3" y2="511.1" stroke="#f00" stroke-width="0.9"/><line x1="138.3" y1="523.9" x2="151.1" y2="511.1" stroke="#f00" stroke-width="0.9"/><line x1="143.1" y1="523.9" x2="155.9" y2="511.1" stroke="#f00" stroke-width="0.9"/><line x1="147.9" y1="523.9" x2="160.7" y2="511.1" stroke="#f00" stroke-width="0.9"/><line x1="152.7" y1="523.9" x2="165.5" y2="511.1" stroke="#f00" stroke-width="0.9"/><line x1="157.5" y1="523.9" x2="170.3" y2="511.1" stroke="#f00" stroke-width="0.9"/><line x1="162.3" y1="523.9" x2="175.1" y2="511.1" stroke="#f00" stroke-width="0.9"/><line x1="167.1" y1="523.9" x2="179.9" y2="511.1" stroke="#f00" stroke-width="0.9"/><line x1="171.9" y1="523.9" x2="184.7" y2="511.1" stroke="#f00" stroke-width="0.9"/><line x1="176.7" y1="523.9" x2="189.5" y2="511.1" stroke="#f00" stroke-width="0.9"/><line x1="181.5" y1="523.9" x2="194.3" y2="511.1" stroke="#f00" stroke-width="0.9"/><line x1="186.3" y1="523.9" x2="199.1" y2="511.1" stroke="#f00" stroke-width="0.9"/><line x1="191.1" y1="523.9" x2="203.9" y2="511.1" stroke="#f00" stroke-width="0.9"/><line x1="195.9" y1="523.9" x2="208.7" y2="511.1" stroke="#f00" stroke-width="0.9"/><line x1="200.7" y1="523.9" x2="213.5" y2="511.1" stroke="#f00" stroke-width="0.9"/><line x1="205.5" y1="523.9" x2="218.3" y2="511.1" stroke="#f00" stroke-width="0.9"/><line x1="210.3" y1="523.9" x2="223.1" y2="511.1" stroke="#f00" stroke-width="0.9"/><line x1="215.1" y1="523.9" x2="227.9" y2="511.1" stroke="#f00" stroke-width="0.9"/><line x1="219.9" y1="523.9" x2="232.7" y2="511.1" stroke="#f00" stroke-width="0.9"/><line x1="224.7" y1="523.9" x2="237.5" y2="511.1" stroke="#f00" stroke-width="0.9"/><line x1="229.5" y1="523.9" x2="242.3" y2="511.1" stroke="#f00" stroke-width="0.9"/><line x1="234.3" y1="523.9" x2="247.1" y2="511.1" stroke="#f00" stroke-width="0.9"/><line x1="239.1" y1="523.9" x2="251.9" y2="511.1" stroke="#f00" stroke-width="0.9"/><line x1="243.9" y1="523.9" x2="256.7" y2="511.1" stroke="#f00" stroke-width="0.9"/><line x1="248.7" y1="523.9" x2="261.5" y2="511.1" stroke="#f00" stroke-width="0.9"/><line x1="253.5" y1="523.9" x2="266.3" y2="511.1" stroke="#f00" stroke-width="0.9"/><line x1="258.3" y1="523.9" x2="271.1" y2="511.1" stroke="#f00" stroke-width="0.9"/><line x1="263.1" y1="523.9" x2="275.9" y2="511.1" stroke="#f00" stroke-width="0.9"/><line x1="267.9" y1="523.9" x2="280.7" y2="511.1" stroke="#f00" stroke-width="0.9"/><line x1="272.7" y1="523.9" x2="285.5" y2="511.1" stroke="#f00" stroke-width="0.9"/><line x1="277.5" y1="523.9" x2="290.3" y2="511.1" stroke="#f00" stroke-width="0.9"/><line x1="282.3" y1="523.9" x2="295.1" y2="511.1" stroke="#f00" stroke-width="0.9"/><line x1="287.1" y1="523.9" x2="299.9" y2="511.1" stroke="#f00" stroke-width="0.9"/><line x1="291.9" y1="523.9" x2="304.7" y2="511.1" stroke="#f00" stroke-width="0.9"/><line x1="296.7" y1="523.9" x2="309.5" y2="511.1" stroke="#f00" stroke-width="0.9"/><line x1="301.5" y1="523.9" x2="314.3" y2="511.1" stroke="#f00" stroke-width="0.9"/><line x1="306.3" y1="523.9" x2="319.1" y2="511.1" stroke="#f00" stroke-width="0.9"/><line x1="311.1" y1="523.9" x2="323.9" y2="511.1" stroke="#f00" stroke-width="0.9"/><line x1="315.9" y1="523.9" x2="328.7" y2="511.1" stroke="#f00" stroke-width="0.9"/><line x1="320.7" y1="523.9" x2="333.5" y2="511.1" stroke="#f00" stroke-width="0.9"/><line x1="325.5" y1="523.9" x2="338.3" y2="511.1" stroke="#f00" stroke-width="0.9"/><line x1="330.3" y1="523.9" x2="343.1" y2="511.1" stroke="#f00" stroke-width="0.9"/><line x1="335.1" y1="523.9" x2="347.9" y2="511.1" stroke="#f00" stroke-width="0.9"/><line x1="339.9" y1="523.9" x2="352.7" y2="511.1" stroke="#f00" stroke-width="0.9"/><line x1="344.7" y1="523.9" x2="357.5" y2="511.1" stroke="#f00" stroke-width="0.9"/><line x1="349.5" y1="523.9" x2="362.3" y2="511.1" stroke="#f00" stroke-width="0.9"/><line x1="354.3" y1="523.9" x2="367.1" y2="511.1" stroke="#f00" stroke-width="0.9"/><line x1="359.1" y1="523.9" x2="371.9" y2="511.1" stroke="#f00" stroke-width="0.9"/><line x1="363.9" y1="523.9" x2="376.7" y2="511.1" stroke="#f00" stroke-width="0.9"/><line x1="368.7" y1="523.9" x2="381.5" y2="511.1" stroke="#f00" stroke-width="0.9"/><line x1="373.5" y1="523.9" x2="386.3" y2="511.1" stroke="#f00" stroke-width="0.9"/><line x1="378.3" y1="523.9" x2="391.1" y2="511.1" stroke="#f00" stroke-width="0.9"/><line x1="383.1" y1="523.9" x2="395.9" y2="511.1" stroke="#f00" stroke-width="0.9"/><line x1="387.9" y1="523.9" x2="400.7" y2="511.1" stroke="#f00" stroke-width="0.9"/><line x1="392.7" y1="523.9" x2="405.5" y2="511.1" stroke="#f00" stroke-width="0.9"/><line x1="397.5" y1="523.9" x2="410.3" y2="511.1" stroke="#f00" stroke-width="0.9"/><line x1="402.3" y1="523.9" x2="415.1" y2="511.1" stroke="#f00" stroke-width="0.9"/><line x1="407.1" y1="523.9" x2="419.9" y2="511.1" stroke="#f00" stroke-width="0.9"/><line x1="411.9" y1="523.9" x2="424.7" y2="511.1" stroke="#f00" stroke-width="0.9"/><line x1="416.7" y1="523.9" x2="429.5" y2="511.1" stroke="#f00" stroke-width="0.9"/><line x1="421.5" y1="523.9" x2="434.3" y2="511.1" stroke="#f00" stroke-width="0.9"/><line x1="426.3" y1="523.9" x2="439.1" y2="511.1" stroke="#f00" stroke-width="0.9"/><line x1="431.1" y1="523.9" x2="443.9" y2="511.1" stroke="#f00" stroke-width="0.9"/></g>
<rect x="244.5" y="511.5" width="15" height="12" fill="none" stroke="#ffffff"/>
<clipPath id="h486"><rect x="262.5" y="480.6" width="4.300000000000011" height="43.299999999999955"/></clipPath>
<g clip-path="url(#h486)"><line x1="70.0" y1="523.9" x2="113.3" y2="480.6" stroke="#f00" stroke-width="0.9"/><line x1="74.8" y1="523.9" x2="118.1" y2="480.6" stroke="#f00" stroke-width="0.9"/><line x1="79.6" y1="523.9" x2="122.9" y2="480.6" stroke="#f00" stroke-width="0.9"/><line x1="84.4" y1="523.9" x2="127.7" y2="480.6" stroke="#f00" stroke-width="0.9"/><line x1="89.2" y1="523.9" x2="132.5" y2="480.6" stroke="#f00" stroke-width="0.9"/><line x1="94.0" y1="523.9" x2="137.3" y2="480.6" stroke="#f00" stroke-width="0.9"/><line x1="98.8" y1="523.9" x2="142.1" y2="480.6" stroke="#f00" stroke-width="0.9"/><line x1="103.6" y1="523.9" x2="146.9" y2="480.6" stroke="#f00" stroke-width="0.9"/><line x1="108.4" y1="523.9" x2="151.7" y2="480.6" stroke="#f00" stroke-width="0.9"/><line x1="113.2" y1="523.9" x2="156.5" y2="480.6" stroke="#f00" stroke-width="0.9"/><line x1="118.0" y1="523.9" x2="161.3" y2="480.6" stroke="#f00" stroke-width="0.9"/><line x1="122.8" y1="523.9" x2="166.1" y2="480.6" stroke="#f00" stroke-width="0.9"/><line x1="127.6" y1="523.9" x2="170.9" y2="480.6" stroke="#f00" stroke-width="0.9"/><line x1="132.4" y1="523.9" x2="175.7" y2="480.6" stroke="#f00" stroke-width="0.9"/><line x1="137.2" y1="523.9" x2="180.5" y2="480.6" stroke="#f00" stroke-width="0.9"/><line x1="142.0" y1="523.9" x2="185.3" y2="480.6" stroke="#f00" stroke-width="0.9"/><line x1="146.8" y1="523.9" x2="190.1" y2="480.6" stroke="#f00" stroke-width="0.9"/><line x1="151.6" y1="523.9" x2="194.9" y2="480.6" stroke="#f00" stroke-width="0.9"/><line x1="156.4" y1="523.9" x2="199.7" y2="480.6" stroke="#f00" stroke-width="0.9"/><line x1="161.2" y1="523.9" x2="204.5" y2="480.6" stroke="#f00" stroke-width="0.9"/><line x1="166.0" y1="523.9" x2="209.3" y2="480.6" stroke="#f00" stroke-width="0.9"/><line x1="170.8" y1="523.9" x2="214.1" y2="480.6" stroke="#f00" stroke-width="0.9"/><line x1="175.6" y1="523.9" x2="218.9" y2="480.6" stroke="#f00" stroke-width="0.9"/><line x1="180.4" y1="523.9" x2="223.7" y2="480.6" stroke="#f00" stroke-width="0.9"/><line x1="185.2" y1="523.9" x2="228.5" y2="480.6" stroke="#f00" stroke-width="0.9"/><line x1="190.0" y1="523.9" x2="233.3" y2="480.6" stroke="#f00" stroke-width="0.9"/><line x1="194.8" y1="523.9" x2="238.1" y2="480.6" stroke="#f00" stroke-width="0.9"/><line x1="199.6" y1="523.9" x2="242.9" y2="480.6" stroke="#f00" stroke-width="0.9"/><line x1="204.4" y1="523.9" x2="247.7" y2="480.6" stroke="#f00" stroke-width="0.9"/><line x1="209.2" y1="523.9" x2="252.5" y2="480.6" stroke="#f00" stroke-width="0.9"/><line x1="214.0" y1="523.9" x2="257.3" y2="480.6" stroke="#f00" stroke-width="0.9"/><line x1="218.8" y1="523.9" x2="262.1" y2="480.6" stroke="#f00" stroke-width="0.9"/><line x1="223.6" y1="523.9" x2="266.9" y2="480.6" stroke="#f00" stroke-width="0.9"/><line x1="228.4" y1="523.9" x2="271.7" y2="480.6" stroke="#f00" stroke-width="0.9"/><line x1="233.2" y1="523.9" x2="276.5" y2="480.6" stroke="#f00" stroke-width="0.9"/><line x1="238.0" y1="523.9" x2="281.3" y2="480.6" stroke="#f00" stroke-width="0.9"/><line x1="242.8" y1="523.9" x2="286.1" y2="480.6" stroke="#f00" stroke-width="0.9"/><line x1="247.6" y1="523.9" x2="290.9" y2="480.6" stroke="#f00" stroke-width="0.9"/><line x1="252.4" y1="523.9" x2="295.7" y2="480.6" stroke="#f00" stroke-width="0.9"/><line x1="257.2" y1="523.9" x2="300.5" y2="480.6" stroke="#f00" stroke-width="0.9"/><line x1="262.0" y1="523.9" x2="305.3" y2="480.6" stroke="#f00" stroke-width="0.9"/><line x1="266.8" y1="523.9" x2="310.1" y2="480.6" stroke="#f00" stroke-width="0.9"/><line x1="271.6" y1="523.9" x2="314.9" y2="480.6" stroke="#f00" stroke-width="0.9"/><line x1="276.4" y1="523.9" x2="319.7" y2="480.6" stroke="#f00" stroke-width="0.9"/><line x1="281.2" y1="523.9" x2="324.5" y2="480.6" stroke="#f00" stroke-width="0.9"/><line x1="286.0" y1="523.9" x2="329.3" y2="480.6" stroke="#f00" stroke-width="0.9"/><line x1="290.8" y1="523.9" x2="334.1" y2="480.6" stroke="#f00" stroke-width="0.9"/><line x1="295.6" y1="523.9" x2="338.9" y2="480.6" stroke="#f00" stroke-width="0.9"/><line x1="300.4" y1="523.9" x2="343.7" y2="480.6" stroke="#f00" stroke-width="0.9"/><line x1="305.2" y1="523.9" x2="348.5" y2="480.6" stroke="#f00" stroke-width="0.9"/><line x1="310.0" y1="523.9" x2="353.3" y2="480.6" stroke="#f00" stroke-width="0.9"/><line x1="314.8" y1="523.9" x2="358.1" y2="480.6" stroke="#f00" stroke-width="0.9"/><line x1="319.6" y1="523.9" x2="362.9" y2="480.6" stroke="#f00" stroke-width="0.9"/><line x1="324.4" y1="523.9" x2="367.7" y2="480.6" stroke="#f00" stroke-width="0.9"/><line x1="329.2" y1="523.9" x2="372.5" y2="480.6" stroke="#f00" stroke-width="0.9"/><line x1="334.0" y1="523.9" x2="377.3" y2="480.6" stroke="#f00" stroke-width="0.9"/><line x1="338.8" y1="523.9" x2="382.1" y2="480.6" stroke="#f00" stroke-width="0.9"/><line x1="343.6" y1="523.9" x2="386.9" y2="480.6" stroke="#f00" stroke-width="0.9"/><line x1="348.4" y1="523.9" x2="391.7" y2="480.6" stroke="#f00" stroke-width="0.9"/><line x1="353.2" y1="523.9" x2="396.5" y2="480.6" stroke="#f00" stroke-width="0.9"/><line x1="358.0" y1="523.9" x2="401.3" y2="480.6" stroke="#f00" stroke-width="0.9"/><line x1="362.8" y1="523.9" x2="406.1" y2="480.6" stroke="#f00" stroke-width="0.9"/><line x1="367.6" y1="523.9" x2="410.9" y2="480.6" stroke="#f00" stroke-width="0.9"/><line x1="372.4" y1="523.9" x2="415.7" y2="480.6" stroke="#f00" stroke-width="0.9"/><line x1="377.2" y1="523.9" x2="420.5" y2="480.6" stroke="#f00" stroke-width="0.9"/><line x1="382.0" y1="523.9" x2="425.3" y2="480.6" stroke="#f00" stroke-width="0.9"/><line x1="386.8" y1="523.9" x2="430.1" y2="480.6" stroke="#f00" stroke-width="0.9"/><line x1="391.6" y1="523.9" x2="434.9" y2="480.6" stroke="#f00" stroke-width="0.9"/><line x1="396.4" y1="523.9" x2="439.7" y2="480.6" stroke="#f00" stroke-width="0.9"/><line x1="401.2" y1="523.9" x2="444.5" y2="480.6" stroke="#f00" stroke-width="0.9"/><line x1="406.0" y1="523.9" x2="449.3" y2="480.6" stroke="#f00" stroke-width="0.9"/><line x1="410.8" y1="523.9" x2="454.1" y2="480.6" stroke="#f00" stroke-width="0.9"/><line x1="415.6" y1="523.9" x2="458.9" y2="480.6" stroke="#f00" stroke-width="0.9"/><line x1="420.4" y1="523.9" x2="463.7" y2="480.6" stroke="#f00" stroke-width="0.9"/><line x1="425.2" y1="523.9" x2="468.5" y2="480.6" stroke="#f00" stroke-width="0.9"/><line x1="430.0" y1="523.9" x2="473.3" y2="480.6" stroke="#f00" stroke-width="0.9"/><line x1="434.8" y1="523.9" x2="478.1" y2="480.6" stroke="#f00" stroke-width="0.9"/><line x1="439.6" y1="523.9" x2="482.9" y2="480.6" stroke="#f00" stroke-width="0.9"/><line x1="444.4" y1="523.9" x2="487.7" y2="480.6" stroke="#f00" stroke-width="0.9"/><line x1="449.2" y1="523.9" x2="492.5" y2="480.6" stroke="#f00" stroke-width="0.9"/></g>
<rect x="262.5" y="480.5" width="4" height="43" fill="none" stroke="#ffffff"/>
<rect x="238.5" y="493.5" width="23" height="18" fill="none" stroke="#ffffff"/>
<rect x="235.5" y="491.5" width="3" height="22" fill="none" stroke="#ffffff"/>
<rect x="266.5" y="491.5" width="6" height="22" fill="none" stroke="#ffffff"/>
<rect x="226.5" y="497.5" width="8" height="9" fill="none" stroke="#ffffff"/>
<line x1="234.2" y1="497.5" x2="235.3" y2="497.5" stroke="#ffffff"/>
<line x1="234.2" y1="506.5" x2="235.3" y2="506.5" stroke="#ffffff"/>
<line x1="248.5" y1="493.5" x2="248.5" y2="511.1" stroke="#00ff00"/>
<line x1="266.5" y1="492.5" x2="266.5" y2="512" stroke="#00ff00"/>
<line x1="260.9" y1="492.5" x2="268.4" y2="492.5" stroke="#00ff00"/>
<line x1="260.9" y1="511.5" x2="268.4" y2="511.5" stroke="#00ff00"/>
<text transform="translate(247.6,510.5) rotate(-90)" x="0" y="0" font-size="8.41" fill="#ffff00" font-weight="normal" textLength="16.5" lengthAdjust="spacingAndGlyphs">Φ45H7</text>
<text transform="translate(266.2,507.8) rotate(-90)" x="0" y="0" font-size="6.09" fill="#ffff00" font-weight="normal" textLength="11.1" lengthAdjust="spacingAndGlyphs">Φ10</text>
<line x1="225.7" y1="502.5" x2="274.8" y2="502.5" stroke="#00ffff" stroke-dasharray="9,2,1,2"/>
<line x1="251.5" y1="466.5" x2="251.5" y2="524.5" stroke="#00ffff" stroke-dasharray="9,2,1,2"/>
<rect x="237" y="523" width="1" height="1" fill="#0000ff"/>
<rect x="262" y="523" width="1" height="1" fill="#0000ff"/>
<text x="357" y="458" font-size="8.7" fill="#ffff00" font-weight="normal" textLength="8" lengthAdjust="spacingAndGlyphs">25</text>
<line x1="358.5" y1="458.5" x2="367.5" y2="458.5" stroke="#00ff00"/>
<line x1="367.5" y1="458.9" x2="375.3" y2="488.8" stroke="#00ff00"/>
<rect x="387" y="450" width="2" height="4" fill="#ffff00"/>
<line x1="392.5" y1="452.5" x2="394.5" y2="452.5" stroke="#ffff00"/>
<rect x="397" y="450" width="2" height="4" fill="#ffff00"/>
<clipPath id="h511"><rect x="377.5" y="469.6" width="4.199999999999989" height="46.89999999999998"/></clipPath>
<g clip-path="url(#h511)"><line x1="237.0" y1="516.5" x2="283.9" y2="469.6" stroke="#f00" stroke-width="0.9"/><line x1="240.5" y1="516.5" x2="287.4" y2="469.6" stroke="#f00" stroke-width="0.9"/><line x1="244.0" y1="516.5" x2="290.9" y2="469.6" stroke="#f00" stroke-width="0.9"/><line x1="247.5" y1="516.5" x2="294.4" y2="469.6" stroke="#f00" stroke-width="0.9"/><line x1="251.0" y1="516.5" x2="297.9" y2="469.6" stroke="#f00" stroke-width="0.9"/><line x1="254.5" y1="516.5" x2="301.4" y2="469.6" stroke="#f00" stroke-width="0.9"/><line x1="258.0" y1="516.5" x2="304.9" y2="469.6" stroke="#f00" stroke-width="0.9"/><line x1="261.5" y1="516.5" x2="308.4" y2="469.6" stroke="#f00" stroke-width="0.9"/><line x1="265.0" y1="516.5" x2="311.9" y2="469.6" stroke="#f00" stroke-width="0.9"/><line x1="268.5" y1="516.5" x2="315.4" y2="469.6" stroke="#f00" stroke-width="0.9"/><line x1="272.0" y1="516.5" x2="318.9" y2="469.6" stroke="#f00" stroke-width="0.9"/><line x1="275.5" y1="516.5" x2="322.4" y2="469.6" stroke="#f00" stroke-width="0.9"/><line x1="279.0" y1="516.5" x2="325.9" y2="469.6" stroke="#f00" stroke-width="0.9"/><line x1="282.5" y1="516.5" x2="329.4" y2="469.6" stroke="#f00" stroke-width="0.9"/><line x1="286.0" y1="516.5" x2="332.9" y2="469.6" stroke="#f00" stroke-width="0.9"/><line x1="289.5" y1="516.5" x2="336.4" y2="469.6" stroke="#f00" stroke-width="0.9"/><line x1="293.0" y1="516.5" x2="339.9" y2="469.6" stroke="#f00" stroke-width="0.9"/><line x1="296.5" y1="516.5" x2="343.4" y2="469.6" stroke="#f00" stroke-width="0.9"/><line x1="300.0" y1="516.5" x2="346.9" y2="469.6" stroke="#f00" stroke-width="0.9"/><line x1="303.5" y1="516.5" x2="350.4" y2="469.6" stroke="#f00" stroke-width="0.9"/><line x1="307.0" y1="516.5" x2="353.9" y2="469.6" stroke="#f00" stroke-width="0.9"/><line x1="310.5" y1="516.5" x2="357.4" y2="469.6" stroke="#f00" stroke-width="0.9"/><line x1="314.0" y1="516.5" x2="360.9" y2="469.6" stroke="#f00" stroke-width="0.9"/><line x1="317.5" y1="516.5" x2="364.4" y2="469.6" stroke="#f00" stroke-width="0.9"/><line x1="321.0" y1="516.5" x2="367.9" y2="469.6" stroke="#f00" stroke-width="0.9"/><line x1="324.5" y1="516.5" x2="371.4" y2="469.6" stroke="#f00" stroke-width="0.9"/><line x1="328.0" y1="516.5" x2="374.9" y2="469.6" stroke="#f00" stroke-width="0.9"/><line x1="331.5" y1="516.5" x2="378.4" y2="469.6" stroke="#f00" stroke-width="0.9"/><line x1="335.0" y1="516.5" x2="381.9" y2="469.6" stroke="#f00" stroke-width="0.9"/><line x1="338.5" y1="516.5" x2="385.4" y2="469.6" stroke="#f00" stroke-width="0.9"/><line x1="342.0" y1="516.5" x2="388.9" y2="469.6" stroke="#f00" stroke-width="0.9"/><line x1="345.5" y1="516.5" x2="392.4" y2="469.6" stroke="#f00" stroke-width="0.9"/><line x1="349.0" y1="516.5" x2="395.9" y2="469.6" stroke="#f00" stroke-width="0.9"/><line x1="352.5" y1="516.5" x2="399.4" y2="469.6" stroke="#f00" stroke-width="0.9"/><line x1="356.0" y1="516.5" x2="402.9" y2="469.6" stroke="#f00" stroke-width="0.9"/><line x1="359.5" y1="516.5" x2="406.4" y2="469.6" stroke="#f00" stroke-width="0.9"/><line x1="363.0" y1="516.5" x2="409.9" y2="469.6" stroke="#f00" stroke-width="0.9"/><line x1="366.5" y1="516.5" x2="413.4" y2="469.6" stroke="#f00" stroke-width="0.9"/><line x1="370.0" y1="516.5" x2="416.9" y2="469.6" stroke="#f00" stroke-width="0.9"/><line x1="373.5" y1="516.5" x2="420.4" y2="469.6" stroke="#f00" stroke-width="0.9"/><line x1="377.0" y1="516.5" x2="423.9" y2="469.6" stroke="#f00" stroke-width="0.9"/><line x1="380.5" y1="516.5" x2="427.4" y2="469.6" stroke="#f00" stroke-width="0.9"/><line x1="384.0" y1="516.5" x2="430.9" y2="469.6" stroke="#f00" stroke-width="0.9"/><line x1="387.5" y1="516.5" x2="434.4" y2="469.6" stroke="#f00" stroke-width="0.9"/><line x1="391.0" y1="516.5" x2="437.9" y2="469.6" stroke="#f00" stroke-width="0.9"/><line x1="394.5" y1="516.5" x2="441.4" y2="469.6" stroke="#f00" stroke-width="0.9"/><line x1="398.0" y1="516.5" x2="444.9" y2="469.6" stroke="#f00" stroke-width="0.9"/><line x1="401.5" y1="516.5" x2="448.4" y2="469.6" stroke="#f00" stroke-width="0.9"/><line x1="405.0" y1="516.5" x2="451.9" y2="469.6" stroke="#f00" stroke-width="0.9"/><line x1="408.5" y1="516.5" x2="455.4" y2="469.6" stroke="#f00" stroke-width="0.9"/><line x1="412.0" y1="516.5" x2="458.9" y2="469.6" stroke="#f00" stroke-width="0.9"/><line x1="415.5" y1="516.5" x2="462.4" y2="469.6" stroke="#f00" stroke-width="0.9"/><line x1="419.0" y1="516.5" x2="465.9" y2="469.6" stroke="#f00" stroke-width="0.9"/><line x1="422.5" y1="516.5" x2="469.4" y2="469.6" stroke="#f00" stroke-width="0.9"/><line x1="426.0" y1="516.5" x2="472.9" y2="469.6" stroke="#f00" stroke-width="0.9"/><line x1="429.5" y1="516.5" x2="476.4" y2="469.6" stroke="#f00" stroke-width="0.9"/><line x1="433.0" y1="516.5" x2="479.9" y2="469.6" stroke="#f00" stroke-width="0.9"/><line x1="436.5" y1="516.5" x2="483.4" y2="469.6" stroke="#f00" stroke-width="0.9"/><line x1="440.0" y1="516.5" x2="486.9" y2="469.6" stroke="#f00" stroke-width="0.9"/><line x1="443.5" y1="516.5" x2="490.4" y2="469.6" stroke="#f00" stroke-width="0.9"/><line x1="447.0" y1="516.5" x2="493.9" y2="469.6" stroke="#f00" stroke-width="0.9"/><line x1="450.5" y1="516.5" x2="497.4" y2="469.6" stroke="#f00" stroke-width="0.9"/><line x1="454.0" y1="516.5" x2="500.9" y2="469.6" stroke="#f00" stroke-width="0.9"/><line x1="457.5" y1="516.5" x2="504.4" y2="469.6" stroke="#f00" stroke-width="0.9"/><line x1="461.0" y1="516.5" x2="507.9" y2="469.6" stroke="#f00" stroke-width="0.9"/><line x1="464.5" y1="516.5" x2="511.4" y2="469.6" stroke="#f00" stroke-width="0.9"/><line x1="468.0" y1="516.5" x2="514.9" y2="469.6" stroke="#f00" stroke-width="0.9"/><line x1="471.5" y1="516.5" x2="518.4" y2="469.6" stroke="#f00" stroke-width="0.9"/><line x1="475.0" y1="516.5" x2="521.9" y2="469.6" stroke="#f00" stroke-width="0.9"/><line x1="478.5" y1="516.5" x2="525.4" y2="469.6" stroke="#f00" stroke-width="0.9"/><line x1="482.0" y1="516.5" x2="528.9" y2="469.6" stroke="#f00" stroke-width="0.9"/><line x1="485.5" y1="516.5" x2="532.4" y2="469.6" stroke="#f00" stroke-width="0.9"/><line x1="489.0" y1="516.5" x2="535.9" y2="469.6" stroke="#f00" stroke-width="0.9"/><line x1="492.5" y1="516.5" x2="539.4" y2="469.6" stroke="#f00" stroke-width="0.9"/><line x1="496.0" y1="516.5" x2="542.9" y2="469.6" stroke="#f00" stroke-width="0.9"/><line x1="499.5" y1="516.5" x2="546.4" y2="469.6" stroke="#f00" stroke-width="0.9"/><line x1="503.0" y1="516.5" x2="549.9" y2="469.6" stroke="#f00" stroke-width="0.9"/><line x1="506.5" y1="516.5" x2="553.4" y2="469.6" stroke="#f00" stroke-width="0.9"/><line x1="510.0" y1="516.5" x2="556.9" y2="469.6" stroke="#f00" stroke-width="0.9"/><line x1="513.5" y1="516.5" x2="560.4" y2="469.6" stroke="#f00" stroke-width="0.9"/></g>
<rect x="377.5" y="469.5" width="4" height="47" fill="none" stroke="#ffffff"/>
<clipPath id="h514"><rect x="384.4" y="469.6" width="14.900000000000034" height="12.299999999999955"/></clipPath>
<g clip-path="url(#h514)"><line x1="191.9" y1="481.9" x2="204.2" y2="469.6" stroke="#f00" stroke-width="0.9"/><line x1="196.7" y1="481.9" x2="209.0" y2="469.6" stroke="#f00" stroke-width="0.9"/><line x1="201.5" y1="481.9" x2="213.8" y2="469.6" stroke="#f00" stroke-width="0.9"/><line x1="206.3" y1="481.9" x2="218.6" y2="469.6" stroke="#f00" stroke-width="0.9"/><line x1="211.1" y1="481.9" x2="223.4" y2="469.6" stroke="#f00" stroke-width="0.9"/><line x1="215.9" y1="481.9" x2="228.2" y2="469.6" stroke="#f00" stroke-width="0.9"/><line x1="220.7" y1="481.9" x2="233.0" y2="469.6" stroke="#f00" stroke-width="0.9"/><line x1="225.5" y1="481.9" x2="237.8" y2="469.6" stroke="#f00" stroke-width="0.9"/><line x1="230.3" y1="481.9" x2="242.6" y2="469.6" stroke="#f00" stroke-width="0.9"/><line x1="235.1" y1="481.9" x2="247.4" y2="469.6" stroke="#f00" stroke-width="0.9"/><line x1="239.9" y1="481.9" x2="252.2" y2="469.6" stroke="#f00" stroke-width="0.9"/><line x1="244.7" y1="481.9" x2="257.0" y2="469.6" stroke="#f00" stroke-width="0.9"/><line x1="249.5" y1="481.9" x2="261.8" y2="469.6" stroke="#f00" stroke-width="0.9"/><line x1="254.3" y1="481.9" x2="266.6" y2="469.6" stroke="#f00" stroke-width="0.9"/><line x1="259.1" y1="481.9" x2="271.4" y2="469.6" stroke="#f00" stroke-width="0.9"/><line x1="263.9" y1="481.9" x2="276.2" y2="469.6" stroke="#f00" stroke-width="0.9"/><line x1="268.7" y1="481.9" x2="281.0" y2="469.6" stroke="#f00" stroke-width="0.9"/><line x1="273.5" y1="481.9" x2="285.8" y2="469.6" stroke="#f00" stroke-width="0.9"/><line x1="278.3" y1="481.9" x2="290.6" y2="469.6" stroke="#f00" stroke-width="0.9"/><line x1="283.1" y1="481.9" x2="295.4" y2="469.6" stroke="#f00" stroke-width="0.9"/><line x1="287.9" y1="481.9" x2="300.2" y2="469.6" stroke="#f00" stroke-width="0.9"/><line x1="292.7" y1="481.9" x2="305.0" y2="469.6" stroke="#f00" stroke-width="0.9"/><line x1="297.5" y1="481.9" x2="309.8" y2="469.6" stroke="#f00" stroke-width="0.9"/><line x1="302.3" y1="481.9" x2="314.6" y2="469.6" stroke="#f00" stroke-width="0.9"/><line x1="307.1" y1="481.9" x2="319.4" y2="469.6" stroke="#f00" stroke-width="0.9"/><line x1="311.9" y1="481.9" x2="324.2" y2="469.6" stroke="#f00" stroke-width="0.9"/><line x1="316.7" y1="481.9" x2="329.0" y2="469.6" stroke="#f00" stroke-width="0.9"/><line x1="321.5" y1="481.9" x2="333.8" y2="469.6" stroke="#f00" stroke-width="0.9"/><line x1="326.3" y1="481.9" x2="338.6" y2="469.6" stroke="#f00" stroke-width="0.9"/><line x1="331.1" y1="481.9" x2="343.4" y2="469.6" stroke="#f00" stroke-width="0.9"/><line x1="335.9" y1="481.9" x2="348.2" y2="469.6" stroke="#f00" stroke-width="0.9"/><line x1="340.7" y1="481.9" x2="353.0" y2="469.6" stroke="#f00" stroke-width="0.9"/><line x1="345.5" y1="481.9" x2="357.8" y2="469.6" stroke="#f00" stroke-width="0.9"/><line x1="350.3" y1="481.9" x2="362.6" y2="469.6" stroke="#f00" stroke-width="0.9"/><line x1="355.1" y1="481.9" x2="367.4" y2="469.6" stroke="#f00" stroke-width="0.9"/><line x1="359.9" y1="481.9" x2="372.2" y2="469.6" stroke="#f00" stroke-width="0.9"/><line x1="364.7" y1="481.9" x2="377.0" y2="469.6" stroke="#f00" stroke-width="0.9"/><line x1="369.5" y1="481.9" x2="381.8" y2="469.6" stroke="#f00" stroke-width="0.9"/><line x1="374.3" y1="481.9" x2="386.6" y2="469.6" stroke="#f00" stroke-width="0.9"/><line x1="379.1" y1="481.9" x2="391.4" y2="469.6" stroke="#f00" stroke-width="0.9"/><line x1="383.9" y1="481.9" x2="396.2" y2="469.6" stroke="#f00" stroke-width="0.9"/><line x1="388.7" y1="481.9" x2="401.0" y2="469.6" stroke="#f00" stroke-width="0.9"/><line x1="393.5" y1="481.9" x2="405.8" y2="469.6" stroke="#f00" stroke-width="0.9"/><line x1="398.3" y1="481.9" x2="410.6" y2="469.6" stroke="#f00" stroke-width="0.9"/><line x1="403.1" y1="481.9" x2="415.4" y2="469.6" stroke="#f00" stroke-width="0.9"/><line x1="407.9" y1="481.9" x2="420.2" y2="469.6" stroke="#f00" stroke-width="0.9"/><line x1="412.7" y1="481.9" x2="425.0" y2="469.6" stroke="#f00" stroke-width="0.9"/><line x1="417.5" y1="481.9" x2="429.8" y2="469.6" stroke="#f00" stroke-width="0.9"/><line x1="422.3" y1="481.9" x2="434.6" y2="469.6" stroke="#f00" stroke-width="0.9"/><line x1="427.1" y1="481.9" x2="439.4" y2="469.6" stroke="#f00" stroke-width="0.9"/><line x1="431.9" y1="481.9" x2="444.2" y2="469.6" stroke="#f00" stroke-width="0.9"/><line x1="436.7" y1="481.9" x2="449.0" y2="469.6" stroke="#f00" stroke-width="0.9"/><line x1="441.5" y1="481.9" x2="453.8" y2="469.6" stroke="#f00" stroke-width="0.9"/><line x1="446.3" y1="481.9" x2="458.6" y2="469.6" stroke="#f00" stroke-width="0.9"/><line x1="451.1" y1="481.9" x2="463.4" y2="469.6" stroke="#f00" stroke-width="0.9"/><line x1="455.9" y1="481.9" x2="468.2" y2="469.6" stroke="#f00" stroke-width="0.9"/><line x1="460.7" y1="481.9" x2="473.0" y2="469.6" stroke="#f00" stroke-width="0.9"/><line x1="465.5" y1="481.9" x2="477.8" y2="469.6" stroke="#f00" stroke-width="0.9"/><line x1="470.3" y1="481.9" x2="482.6" y2="469.6" stroke="#f00" stroke-width="0.9"/><line x1="475.1" y1="481.9" x2="487.4" y2="469.6" stroke="#f00" stroke-width="0.9"/><line x1="479.9" y1="481.9" x2="492.2" y2="469.6" stroke="#f00" stroke-width="0.9"/><line x1="484.7" y1="481.9" x2="497.0" y2="469.6" stroke="#f00" stroke-width="0.9"/><line x1="489.5" y1="481.9" x2="501.8" y2="469.6" stroke="#f00" stroke-width="0.9"/><line x1="494.3" y1="481.9" x2="506.6" y2="469.6" stroke="#f00" stroke-width="0.9"/><line x1="499.1" y1="481.9" x2="511.4" y2="469.6" stroke="#f00" stroke-width="0.9"/><line x1="503.9" y1="481.9" x2="516.2" y2="469.6" stroke="#f00" stroke-width="0.9"/><line x1="508.7" y1="481.9" x2="521.0" y2="469.6" stroke="#f00" stroke-width="0.9"/><line x1="513.5" y1="481.9" x2="525.8" y2="469.6" stroke="#f00" stroke-width="0.9"/><line x1="518.3" y1="481.9" x2="530.6" y2="469.6" stroke="#f00" stroke-width="0.9"/><line x1="523.1" y1="481.9" x2="535.4" y2="469.6" stroke="#f00" stroke-width="0.9"/><line x1="527.9" y1="481.9" x2="540.2" y2="469.6" stroke="#f00" stroke-width="0.9"/><line x1="532.7" y1="481.9" x2="545.0" y2="469.6" stroke="#f00" stroke-width="0.9"/><line x1="537.5" y1="481.9" x2="549.8" y2="469.6" stroke="#f00" stroke-width="0.9"/><line x1="542.3" y1="481.9" x2="554.6" y2="469.6" stroke="#f00" stroke-width="0.9"/><line x1="547.1" y1="481.9" x2="559.4" y2="469.6" stroke="#f00" stroke-width="0.9"/><line x1="551.9" y1="481.9" x2="564.2" y2="469.6" stroke="#f00" stroke-width="0.9"/><line x1="556.7" y1="481.9" x2="569.0" y2="469.6" stroke="#f00" stroke-width="0.9"/><line x1="561.5" y1="481.9" x2="573.8" y2="469.6" stroke="#f00" stroke-width="0.9"/><line x1="566.3" y1="481.9" x2="578.6" y2="469.6" stroke="#f00" stroke-width="0.9"/><line x1="571.1" y1="481.9" x2="583.4" y2="469.6" stroke="#f00" stroke-width="0.9"/></g>
<rect x="384.5" y="469.5" width="15" height="12" fill="none" stroke="#ffffff"/>
<clipPath id="h517"><rect x="384.4" y="499.5" width="14.900000000000034" height="12.800000000000011"/></clipPath>
<g clip-path="url(#h517)"><line x1="191.9" y1="512.3" x2="204.7" y2="499.5" stroke="#f00" stroke-width="0.9"/><line x1="196.7" y1="512.3" x2="209.5" y2="499.5" stroke="#f00" stroke-width="0.9"/><line x1="201.5" y1="512.3" x2="214.3" y2="499.5" stroke="#f00" stroke-width="0.9"/><line x1="206.3" y1="512.3" x2="219.1" y2="499.5" stroke="#f00" stroke-width="0.9"/><line x1="211.1" y1="512.3" x2="223.9" y2="499.5" stroke="#f00" stroke-width="0.9"/><line x1="215.9" y1="512.3" x2="228.7" y2="499.5" stroke="#f00" stroke-width="0.9"/><line x1="220.7" y1="512.3" x2="233.5" y2="499.5" stroke="#f00" stroke-width="0.9"/><line x1="225.5" y1="512.3" x2="238.3" y2="499.5" stroke="#f00" stroke-width="0.9"/><line x1="230.3" y1="512.3" x2="243.1" y2="499.5" stroke="#f00" stroke-width="0.9"/><line x1="235.1" y1="512.3" x2="247.9" y2="499.5" stroke="#f00" stroke-width="0.9"/><line x1="239.9" y1="512.3" x2="252.7" y2="499.5" stroke="#f00" stroke-width="0.9"/><line x1="244.7" y1="512.3" x2="257.5" y2="499.5" stroke="#f00" stroke-width="0.9"/><line x1="249.5" y1="512.3" x2="262.3" y2="499.5" stroke="#f00" stroke-width="0.9"/><line x1="254.3" y1="512.3" x2="267.1" y2="499.5" stroke="#f00" stroke-width="0.9"/><line x1="259.1" y1="512.3" x2="271.9" y2="499.5" stroke="#f00" stroke-width="0.9"/><line x1="263.9" y1="512.3" x2="276.7" y2="499.5" stroke="#f00" stroke-width="0.9"/><line x1="268.7" y1="512.3" x2="281.5" y2="499.5" stroke="#f00" stroke-width="0.9"/><line x1="273.5" y1="512.3" x2="286.3" y2="499.5" stroke="#f00" stroke-width="0.9"/><line x1="278.3" y1="512.3" x2="291.1" y2="499.5" stroke="#f00" stroke-width="0.9"/><line x1="283.1" y1="512.3" x2="295.9" y2="499.5" stroke="#f00" stroke-width="0.9"/><line x1="287.9" y1="512.3" x2="300.7" y2="499.5" stroke="#f00" stroke-width="0.9"/><line x1="292.7" y1="512.3" x2="305.5" y2="499.5" stroke="#f00" stroke-width="0.9"/><line x1="297.5" y1="512.3" x2="310.3" y2="499.5" stroke="#f00" stroke-width="0.9"/><line x1="302.3" y1="512.3" x2="315.1" y2="499.5" stroke="#f00" stroke-width="0.9"/><line x1="307.1" y1="512.3" x2="319.9" y2="499.5" stroke="#f00" stroke-width="0.9"/><line x1="311.9" y1="512.3" x2="324.7" y2="499.5" stroke="#f00" stroke-width="0.9"/><line x1="316.7" y1="512.3" x2="329.5" y2="499.5" stroke="#f00" stroke-width="0.9"/><line x1="321.5" y1="512.3" x2="334.3" y2="499.5" stroke="#f00" stroke-width="0.9"/><line x1="326.3" y1="512.3" x2="339.1" y2="499.5" stroke="#f00" stroke-width="0.9"/><line x1="331.1" y1="512.3" x2="343.9" y2="499.5" stroke="#f00" stroke-width="0.9"/><line x1="335.9" y1="512.3" x2="348.7" y2="499.5" stroke="#f00" stroke-width="0.9"/><line x1="340.7" y1="512.3" x2="353.5" y2="499.5" stroke="#f00" stroke-width="0.9"/><line x1="345.5" y1="512.3" x2="358.3" y2="499.5" stroke="#f00" stroke-width="0.9"/><line x1="350.3" y1="512.3" x2="363.1" y2="499.5" stroke="#f00" stroke-width="0.9"/><line x1="355.1" y1="512.3" x2="367.9" y2="499.5" stroke="#f00" stroke-width="0.9"/><line x1="359.9" y1="512.3" x2="372.7" y2="499.5" stroke="#f00" stroke-width="0.9"/><line x1="364.7" y1="512.3" x2="377.5" y2="499.5" stroke="#f00" stroke-width="0.9"/><line x1="369.5" y1="512.3" x2="382.3" y2="499.5" stroke="#f00" stroke-width="0.9"/><line x1="374.3" y1="512.3" x2="387.1" y2="499.5" stroke="#f00" stroke-width="0.9"/><line x1="379.1" y1="512.3" x2="391.9" y2="499.5" stroke="#f00" stroke-width="0.9"/><line x1="383.9" y1="512.3" x2="396.7" y2="499.5" stroke="#f00" stroke-width="0.9"/><line x1="388.7" y1="512.3" x2="401.5" y2="499.5" stroke="#f00" stroke-width="0.9"/><line x1="393.5" y1="512.3" x2="406.3" y2="499.5" stroke="#f00" stroke-width="0.9"/><line x1="398.3" y1="512.3" x2="411.1" y2="499.5" stroke="#f00" stroke-width="0.9"/><line x1="403.1" y1="512.3" x2="415.9" y2="499.5" stroke="#f00" stroke-width="0.9"/><line x1="407.9" y1="512.3" x2="420.7" y2="499.5" stroke="#f00" stroke-width="0.9"/><line x1="412.7" y1="512.3" x2="425.5" y2="499.5" stroke="#f00" stroke-width="0.9"/><line x1="417.5" y1="512.3" x2="430.3" y2="499.5" stroke="#f00" stroke-width="0.9"/><line x1="422.3" y1="512.3" x2="435.1" y2="499.5" stroke="#f00" stroke-width="0.9"/><line x1="427.1" y1="512.3" x2="439.9" y2="499.5" stroke="#f00" stroke-width="0.9"/><line x1="431.9" y1="512.3" x2="444.7" y2="499.5" stroke="#f00" stroke-width="0.9"/><line x1="436.7" y1="512.3" x2="449.5" y2="499.5" stroke="#f00" stroke-width="0.9"/><line x1="441.5" y1="512.3" x2="454.3" y2="499.5" stroke="#f00" stroke-width="0.9"/><line x1="446.3" y1="512.3" x2="459.1" y2="499.5" stroke="#f00" stroke-width="0.9"/><line x1="451.1" y1="512.3" x2="463.9" y2="499.5" stroke="#f00" stroke-width="0.9"/><line x1="455.9" y1="512.3" x2="468.7" y2="499.5" stroke="#f00" stroke-width="0.9"/><line x1="460.7" y1="512.3" x2="473.5" y2="499.5" stroke="#f00" stroke-width="0.9"/><line x1="465.5" y1="512.3" x2="478.3" y2="499.5" stroke="#f00" stroke-width="0.9"/><line x1="470.3" y1="512.3" x2="483.1" y2="499.5" stroke="#f00" stroke-width="0.9"/><line x1="475.1" y1="512.3" x2="487.9" y2="499.5" stroke="#f00" stroke-width="0.9"/><line x1="479.9" y1="512.3" x2="492.7" y2="499.5" stroke="#f00" stroke-width="0.9"/><line x1="484.7" y1="512.3" x2="497.5" y2="499.5" stroke="#f00" stroke-width="0.9"/><line x1="489.5" y1="512.3" x2="502.3" y2="499.5" stroke="#f00" stroke-width="0.9"/><line x1="494.3" y1="512.3" x2="507.1" y2="499.5" stroke="#f00" stroke-width="0.9"/><line x1="499.1" y1="512.3" x2="511.9" y2="499.5" stroke="#f00" stroke-width="0.9"/><line x1="503.9" y1="512.3" x2="516.7" y2="499.5" stroke="#f00" stroke-width="0.9"/><line x1="508.7" y1="512.3" x2="521.5" y2="499.5" stroke="#f00" stroke-width="0.9"/><line x1="513.5" y1="512.3" x2="526.3" y2="499.5" stroke="#f00" stroke-width="0.9"/><line x1="518.3" y1="512.3" x2="531.1" y2="499.5" stroke="#f00" stroke-width="0.9"/><line x1="523.1" y1="512.3" x2="535.9" y2="499.5" stroke="#f00" stroke-width="0.9"/><line x1="527.9" y1="512.3" x2="540.7" y2="499.5" stroke="#f00" stroke-width="0.9"/><line x1="532.7" y1="512.3" x2="545.5" y2="499.5" stroke="#f00" stroke-width="0.9"/><line x1="537.5" y1="512.3" x2="550.3" y2="499.5" stroke="#f00" stroke-width="0.9"/><line x1="542.3" y1="512.3" x2="555.1" y2="499.5" stroke="#f00" stroke-width="0.9"/><line x1="547.1" y1="512.3" x2="559.9" y2="499.5" stroke="#f00" stroke-width="0.9"/><line x1="551.9" y1="512.3" x2="564.7" y2="499.5" stroke="#f00" stroke-width="0.9"/><line x1="556.7" y1="512.3" x2="569.5" y2="499.5" stroke="#f00" stroke-width="0.9"/><line x1="561.5" y1="512.3" x2="574.3" y2="499.5" stroke="#f00" stroke-width="0.9"/><line x1="566.3" y1="512.3" x2="579.1" y2="499.5" stroke="#f00" stroke-width="0.9"/><line x1="571.1" y1="512.3" x2="583.9" y2="499.5" stroke="#f00" stroke-width="0.9"/></g>
<rect x="384.5" y="499.5" width="15" height="13" fill="none" stroke="#ffffff"/>
<clipPath id="h520"><rect x="402.5" y="469.6" width="4.300000000000011" height="46.89999999999998"/></clipPath>
<g clip-path="url(#h520)"><line x1="262.0" y1="516.5" x2="308.9" y2="469.6" stroke="#f00" stroke-width="0.9"/><line x1="265.5" y1="516.5" x2="312.4" y2="469.6" stroke="#f00" stroke-width="0.9"/><line x1="269.0" y1="516.5" x2="315.9" y2="469.6" stroke="#f00" stroke-width="0.9"/><line x1="272.5" y1="516.5" x2="319.4" y2="469.6" stroke="#f00" stroke-width="0.9"/><line x1="276.0" y1="516.5" x2="322.9" y2="469.6" stroke="#f00" stroke-width="0.9"/><line x1="279.5" y1="516.5" x2="326.4" y2="469.6" stroke="#f00" stroke-width="0.9"/><line x1="283.0" y1="516.5" x2="329.9" y2="469.6" stroke="#f00" stroke-width="0.9"/><line x1="286.5" y1="516.5" x2="333.4" y2="469.6" stroke="#f00" stroke-width="0.9"/><line x1="290.0" y1="516.5" x2="336.9" y2="469.6" stroke="#f00" stroke-width="0.9"/><line x1="293.5" y1="516.5" x2="340.4" y2="469.6" stroke="#f00" stroke-width="0.9"/><line x1="297.0" y1="516.5" x2="343.9" y2="469.6" stroke="#f00" stroke-width="0.9"/><line x1="300.5" y1="516.5" x2="347.4" y2="469.6" stroke="#f00" stroke-width="0.9"/><line x1="304.0" y1="516.5" x2="350.9" y2="469.6" stroke="#f00" stroke-width="0.9"/><line x1="307.5" y1="516.5" x2="354.4" y2="469.6" stroke="#f00" stroke-width="0.9"/><line x1="311.0" y1="516.5" x2="357.9" y2="469.6" stroke="#f00" stroke-width="0.9"/><line x1="314.5" y1="516.5" x2="361.4" y2="469.6" stroke="#f00" stroke-width="0.9"/><line x1="318.0" y1="516.5" x2="364.9" y2="469.6" stroke="#f00" stroke-width="0.9"/><line x1="321.5" y1="516.5" x2="368.4" y2="469.6" stroke="#f00" stroke-width="0.9"/><line x1="325.0" y1="516.5" x2="371.9" y2="469.6" stroke="#f00" stroke-width="0.9"/><line x1="328.5" y1="516.5" x2="375.4" y2="469.6" stroke="#f00" stroke-width="0.9"/><line x1="332.0" y1="516.5" x2="378.9" y2="469.6" stroke="#f00" stroke-width="0.9"/><line x1="335.5" y1="516.5" x2="382.4" y2="469.6" stroke="#f00" stroke-width="0.9"/><line x1="339.0" y1="516.5" x2="385.9" y2="469.6" stroke="#f00" stroke-width="0.9"/><line x1="342.5" y1="516.5" x2="389.4" y2="469.6" stroke="#f00" stroke-width="0.9"/><line x1="346.0" y1="516.5" x2="392.9" y2="469.6" stroke="#f00" stroke-width="0.9"/><line x1="349.5" y1="516.5" x2="396.4" y2="469.6" stroke="#f00" stroke-width="0.9"/><line x1="353.0" y1="516.5" x2="399.9" y2="469.6" stroke="#f00" stroke-width="0.9"/><line x1="356.5" y1="516.5" x2="403.4" y2="469.6" stroke="#f00" stroke-width="0.9"/><line x1="360.0" y1="516.5" x2="406.9" y2="469.6" stroke="#f00" stroke-width="0.9"/><line x1="363.5" y1="516.5" x2="410.4" y2="469.6" stroke="#f00" stroke-width="0.9"/><line x1="367.0" y1="516.5" x2="413.9" y2="469.6" stroke="#f00" stroke-width="0.9"/><line x1="370.5" y1="516.5" x2="417.4" y2="469.6" stroke="#f00" stroke-width="0.9"/><line x1="374.0" y1="516.5" x2="420.9" y2="469.6" stroke="#f00" stroke-width="0.9"/><line x1="377.5" y1="516.5" x2="424.4" y2="469.6" stroke="#f00" stroke-width="0.9"/><line x1="381.0" y1="516.5" x2="427.9" y2="469.6" stroke="#f00" stroke-width="0.9"/><line x1="384.5" y1="516.5" x2="431.4" y2="469.6" stroke="#f00" stroke-width="0.9"/><line x1="388.0" y1="516.5" x2="434.9" y2="469.6" stroke="#f00" stroke-width="0.9"/><line x1="391.5" y1="516.5" x2="438.4" y2="469.6" stroke="#f00" stroke-width="0.9"/><line x1="395.0" y1="516.5" x2="441.9" y2="469.6" stroke="#f00" stroke-width="0.9"/><line x1="398.5" y1="516.5" x2="445.4" y2="469.6" stroke="#f00" stroke-width="0.9"/><line x1="402.0" y1="516.5" x2="448.9" y2="469.6" stroke="#f00" stroke-width="0.9"/><line x1="405.5" y1="516.5" x2="452.4" y2="469.6" stroke="#f00" stroke-width="0.9"/><line x1="409.0" y1="516.5" x2="455.9" y2="469.6" stroke="#f00" stroke-width="0.9"/><line x1="412.5" y1="516.5" x2="459.4" y2="469.6" stroke="#f00" stroke-width="0.9"/><line x1="416.0" y1="516.5" x2="462.9" y2="469.6" stroke="#f00" stroke-width="0.9"/><line x1="419.5" y1="516.5" x2="466.4" y2="469.6" stroke="#f00" stroke-width="0.9"/><line x1="423.0" y1="516.5" x2="469.9" y2="469.6" stroke="#f00" stroke-width="0.9"/><line x1="426.5" y1="516.5" x2="473.4" y2="469.6" stroke="#f00" stroke-width="0.9"/><line x1="430.0" y1="516.5" x2="476.9" y2="469.6" stroke="#f00" stroke-width="0.9"/><line x1="433.5" y1="516.5" x2="480.4" y2="469.6" stroke="#f00" stroke-width="0.9"/><line x1="437.0" y1="516.5" x2="483.9" y2="469.6" stroke="#f00" stroke-width="0.9"/><line x1="440.5" y1="516.5" x2="487.4" y2="469.6" stroke="#f00" stroke-width="0.9"/><line x1="444.0" y1="516.5" x2="490.9" y2="469.6" stroke="#f00" stroke-width="0.9"/><line x1="447.5" y1="516.5" x2="494.4" y2="469.6" stroke="#f00" stroke-width="0.9"/><line x1="451.0" y1="516.5" x2="497.9" y2="469.6" stroke="#f00" stroke-width="0.9"/><line x1="454.5" y1="516.5" x2="501.4" y2="469.6" stroke="#f00" stroke-width="0.9"/><line x1="458.0" y1="516.5" x2="504.9" y2="469.6" stroke="#f00" stroke-width="0.9"/><line x1="461.5" y1="516.5" x2="508.4" y2="469.6" stroke="#f00" stroke-width="0.9"/><line x1="465.0" y1="516.5" x2="511.9" y2="469.6" stroke="#f00" stroke-width="0.9"/><line x1="468.5" y1="516.5" x2="515.4" y2="469.6" stroke="#f00" stroke-width="0.9"/><line x1="472.0" y1="516.5" x2="518.9" y2="469.6" stroke="#f00" stroke-width="0.9"/><line x1="475.5" y1="516.5" x2="522.4" y2="469.6" stroke="#f00" stroke-width="0.9"/><line x1="479.0" y1="516.5" x2="525.9" y2="469.6" stroke="#f00" stroke-width="0.9"/><line x1="482.5" y1="516.5" x2="529.4" y2="469.6" stroke="#f00" stroke-width="0.9"/><line x1="486.0" y1="516.5" x2="532.9" y2="469.6" stroke="#f00" stroke-width="0.9"/><line x1="489.5" y1="516.5" x2="536.4" y2="469.6" stroke="#f00" stroke-width="0.9"/><line x1="493.0" y1="516.5" x2="539.9" y2="469.6" stroke="#f00" stroke-width="0.9"/><line x1="496.5" y1="516.5" x2="543.4" y2="469.6" stroke="#f00" stroke-width="0.9"/><line x1="500.0" y1="516.5" x2="546.9" y2="469.6" stroke="#f00" stroke-width="0.9"/><line x1="503.5" y1="516.5" x2="550.4" y2="469.6" stroke="#f00" stroke-width="0.9"/><line x1="507.0" y1="516.5" x2="553.9" y2="469.6" stroke="#f00" stroke-width="0.9"/><line x1="510.5" y1="516.5" x2="557.4" y2="469.6" stroke="#f00" stroke-width="0.9"/><line x1="514.0" y1="516.5" x2="560.9" y2="469.6" stroke="#f00" stroke-width="0.9"/><line x1="517.5" y1="516.5" x2="564.4" y2="469.6" stroke="#f00" stroke-width="0.9"/><line x1="521.0" y1="516.5" x2="567.9" y2="469.6" stroke="#f00" stroke-width="0.9"/><line x1="524.5" y1="516.5" x2="571.4" y2="469.6" stroke="#f00" stroke-width="0.9"/><line x1="528.0" y1="516.5" x2="574.9" y2="469.6" stroke="#f00" stroke-width="0.9"/><line x1="531.5" y1="516.5" x2="578.4" y2="469.6" stroke="#f00" stroke-width="0.9"/><line x1="535.0" y1="516.5" x2="581.9" y2="469.6" stroke="#f00" stroke-width="0.9"/><line x1="538.5" y1="516.5" x2="585.4" y2="469.6" stroke="#f00" stroke-width="0.9"/></g>
<rect x="402.5" y="469.5" width="4" height="47" fill="none" stroke="#ffffff"/>
<rect x="384.5" y="481.5" width="15" height="18" fill="none" stroke="#ffffff"/>
<rect x="373.5" y="488.5" width="37" height="5" fill="none" stroke="#ffffff"/>
<rect x="368.5" y="487.5" width="5" height="5" fill="none" stroke="#ffffff"/>
<rect x="372.5" y="485.5" width="5" height="10" fill="none" stroke="#ffffff"/>
<rect x="405.5" y="483.5" width="5" height="14" fill="none" stroke="#ffffff"/>
<line x1="368.5" y1="490.5" x2="411.5" y2="490.5" stroke="#00ffff" stroke-dasharray="9,2,1,2"/>
<line x1="391.5" y1="465.3" x2="391.5" y2="513.9" stroke="#00ffff" stroke-dasharray="9,2,1,2"/>
<rect x="377" y="516" width="5" height="1" fill="#0000ff"/>
<rect x="402" y="516" width="5" height="1" fill="#0000ff"/>
<g class="tb">
<line x1="636.5" y1="328.5" x2="795.5" y2="328.5" stroke="#ffff00"/>
<text x="638" y="333" font-size="5.8" fill="#ffff00" font-weight="normal" textLength="6" lengthAdjust="spacingAndGlyphs">25</text>
<text x="645.5" y="333" font-size="5.8" fill="#ffff00" font-weight="normal" textLength="20.1" lengthAdjust="spacingAndGlyphs">GB70-</text>
<text x="681" y="333" font-size="5.8" fill="#ffff00" font-weight="normal" textLength="15" lengthAdjust="spacingAndGlyphs">M? 3</text>
<text x="720" y="333" font-size="5.8" fill="#ffff00" font-weight="normal" textLength="4" lengthAdjust="spacingAndGlyphs">1</text>
<text x="727.5" y="333" font-size="5.8" fill="#ffff00" font-weight="normal" textLength="12.5" lengthAdjust="spacingAndGlyphs">65M</text>
<text x="768" y="333" font-size="5.8" fill="#ffff00" font-weight="normal" textLength="10.6" lengthAdjust="spacingAndGlyphs">0.07</text>
<line x1="636.5" y1="334.5" x2="795.5" y2="334.5" stroke="#ffff00"/>
<text x="638" y="339.19" font-size="5.8" fill="#ffff00" font-weight="normal" textLength="6" lengthAdjust="spacingAndGlyphs">24</text>
<text x="645.5" y="339.19" font-size="5.8" fill="#ffff00" font-weight="normal" textLength="28.5" lengthAdjust="spacingAndGlyphs">GB70-87x</text>
<text x="681" y="339.19" font-size="5.8" fill="#ffff00" font-weight="normal" textLength="4" lengthAdjust="spacingAndGlyphs">M</text>
<text x="720" y="339.19" font-size="5.8" fill="#ffff00" font-weight="normal" textLength="4" lengthAdjust="spacingAndGlyphs">2</text>
<text x="727.5" y="339.19" font-size="5.8" fill="#ffff00" font-weight="normal" textLength="6.5" lengthAdjust="spacingAndGlyphs">65</text>
<text x="758.5" y="339.19" font-size="5.8" fill="#ffff00" font-weight="normal" textLength="8.5" lengthAdjust="spacingAndGlyphs">0.07</text>
<text x="768" y="339.19" font-size="5.8" fill="#ffff00" font-weight="normal" textLength="10.6" lengthAdjust="spacingAndGlyphs">0.07</text>
<text x="779" y="339.19" font-size="5.8" fill="#ffff00" font-weight="normal" textLength="9" lengthAdjust="spacingAndGlyphs">??</text>
<line x1="636.5" y1="340.5" x2="795.5" y2="340.5" stroke="#ffff00"/>
<text x="638" y="345.38" font-size="5.8" fill="#ffff00" font-weight="normal" textLength="6" lengthAdjust="spacingAndGlyphs">23</text>
<text x="645.5" y="345.38" font-size="5.8" fill="#ffff00" font-weight="normal" textLength="20.1" lengthAdjust="spacingAndGlyphs">GB70-</text>
<text x="681" y="345.38" font-size="5.8" fill="#ffff00" font-weight="normal" textLength="15" lengthAdjust="spacingAndGlyphs">M? 3</text>
<text x="720" y="345.38" font-size="5.8" fill="#ffff00" font-weight="normal" textLength="4" lengthAdjust="spacingAndGlyphs">8</text>
<text x="727.5" y="345.38" font-size="5.8" fill="#ffff00" font-weight="normal" textLength="12.5" lengthAdjust="spacingAndGlyphs">65M</text>
<text x="758.5" y="345.38" font-size="5.8" fill="#ffff00" font-weight="normal" textLength="8.5" lengthAdjust="spacingAndGlyphs">0.07</text>
<text x="768" y="345.38" font-size="5.8" fill="#ffff00" font-weight="normal" textLength="10.6" lengthAdjust="spacingAndGlyphs">0.07</text>
<line x1="636.5" y1="346.5" x2="795.5" y2="346.5" stroke="#ffff00"/>
<text x="638" y="351.57" font-size="5.8" fill="#ffff00" font-weight="normal" textLength="6" lengthAdjust="spacingAndGlyphs">22</text>
<text x="645.5" y="351.57" font-size="5.8" fill="#ffff00" font-weight="normal" textLength="24.5" lengthAdjust="spacingAndGlyphs">GB70-8</text>
<text x="681" y="351.57" font-size="5.8" fill="#ffff00" font-weight="normal" textLength="27" lengthAdjust="spacingAndGlyphs">M? 36xx</text>
<text x="720" y="351.57" font-size="5.8" fill="#ffff00" font-weight="normal" textLength="4" lengthAdjust="spacingAndGlyphs">3</text>
<text x="727.5" y="351.57" font-size="5.8" fill="#ffff00" font-weight="normal" textLength="7.5" lengthAdjust="spacingAndGlyphs">65</text>
<text x="758.5" y="351.57" font-size="5.8" fill="#ffff00" font-weight="normal" textLength="8.5" lengthAdjust="spacingAndGlyphs">0.07</text>
<text x="768" y="351.57" font-size="5.8" fill="#ffff00" font-weight="normal" textLength="10.6" lengthAdjust="spacingAndGlyphs">0.07</text>
<line x1="636.5" y1="352.5" x2="795.5" y2="352.5" stroke="#ffff00"/>
<text x="638" y="357.76" font-size="5.8" fill="#ffff00" font-weight="normal" textLength="6" lengthAdjust="spacingAndGlyphs">21</text>
<text x="645.5" y="357.76" font-size="5.8" fill="#ffff00" font-weight="normal" textLength="20.1" lengthAdjust="spacingAndGlyphs">GB70-</text>
<text x="681" y="357.76" font-size="5.8" fill="#ffff00" font-weight="normal" textLength="15" lengthAdjust="spacingAndGlyphs">M? 3</text>
<text x="720" y="357.76" font-size="5.8" fill="#ffff00" font-weight="normal" textLength="4" lengthAdjust="spacingAndGlyphs">4</text>
<text x="727.5" y="357.76" font-size="5.8" fill="#ffff00" font-weight="normal" textLength="12.5" lengthAdjust="spacingAndGlyphs">65M</text>
<text x="758.5" y="357.76" font-size="5.8" fill="#ffff00" font-weight="normal" textLength="8.5" lengthAdjust="spacingAndGlyphs">0.07</text>
<text x="768" y="357.76" font-size="5.8" fill="#ffff00" font-weight="normal" textLength="10.6" lengthAdjust="spacingAndGlyphs">0.07</text>
<line x1="636.5" y1="358.5" x2="795.5" y2="358.5" stroke="#ffff00"/>
<text x="638" y="363.95" font-size="5.8" fill="#ffff00" font-weight="normal" textLength="6" lengthAdjust="spacingAndGlyphs">20</text>
<text x="645.5" y="363.95" font-size="5.8" fill="#ffff00" font-weight="normal" textLength="24.5" lengthAdjust="spacingAndGlyphs">GB70-8</text>
<text x="681" y="363.95" font-size="5.8" fill="#ffff00" font-weight="normal" textLength="27" lengthAdjust="spacingAndGlyphs">M? 36xx</text>
<text x="720" y="363.95" font-size="5.8" fill="#ffff00" font-weight="normal" textLength="4" lengthAdjust="spacingAndGlyphs">4</text>
<text x="727.5" y="363.95" font-size="5.8" fill="#ffff00" font-weight="normal" textLength="7.5" lengthAdjust="spacingAndGlyphs">65</text>
<text x="758.5" y="363.95" font-size="5.8" fill="#ffff00" font-weight="normal" textLength="8.5" lengthAdjust="spacingAndGlyphs">0.07</text>
<text x="768" y="363.95" font-size="5.8" fill="#ffff00" font-weight="normal" textLength="10.6" lengthAdjust="spacingAndGlyphs">0.07</text>
<line x1="636.5" y1="365.5" x2="795.5" y2="365.5" stroke="#ffff00"/>
<text x="638" y="370.14" font-size="5.8" fill="#ffff00" font-weight="normal" textLength="6" lengthAdjust="spacingAndGlyphs">19</text>
<text x="645.5" y="370.14" font-size="5.8" fill="#ffff00" font-weight="normal" textLength="22" lengthAdjust="spacingAndGlyphs">GB70-8</text>
<text x="681" y="370.14" font-size="5.8" fill="#ffff00" font-weight="normal" textLength="26" lengthAdjust="spacingAndGlyphs">M? 36xx</text>
<text x="720" y="370.14" font-size="5.8" fill="#ffff00" font-weight="normal" textLength="4" lengthAdjust="spacingAndGlyphs">1</text>
<text x="727.5" y="370.14" font-size="5.8" fill="#ffff00" font-weight="normal" textLength="25.3" lengthAdjust="spacingAndGlyphs">65Mnxxx</text>
<text x="768" y="370.14" font-size="5.8" fill="#ffff00" font-weight="normal" textLength="24" lengthAdjust="spacingAndGlyphs">0.07</text>
<line x1="636.5" y1="371.5" x2="795.5" y2="371.5" stroke="#ffff00"/>
<text x="638" y="376.33" font-size="5.8" fill="#ffff00" font-weight="normal" textLength="6" lengthAdjust="spacingAndGlyphs">18</text>
<text x="645.5" y="376.33" font-size="5.8" fill="#ffff00" font-weight="normal" textLength="20.1" lengthAdjust="spacingAndGlyphs">GB70-</text>
<text x="681" y="376.33" font-size="5.8" fill="#ffff00" font-weight="normal" textLength="21" lengthAdjust="spacingAndGlyphs">M? 36</text>
<text x="720" y="376.33" font-size="5.8" fill="#ffff00" font-weight="normal" textLength="4" lengthAdjust="spacingAndGlyphs">1</text>
<text x="727.5" y="376.33" font-size="5.8" fill="#ffff00" font-weight="normal" textLength="6.5" lengthAdjust="spacingAndGlyphs">65</text>
<text x="768" y="376.33" font-size="5.8" fill="#ffff00" font-weight="normal" textLength="10.6" lengthAdjust="spacingAndGlyphs">0.07</text>
<line x1="636.5" y1="377.5" x2="795.5" y2="377.5" stroke="#ffff00"/>
<text x="638" y="382.52" font-size="5.8" fill="#ffff00" font-weight="normal" textLength="6" lengthAdjust="spacingAndGlyphs">17</text>
<text x="645.5" y="382.52" font-size="5.8" fill="#ffff00" font-weight="normal" textLength="20.1" lengthAdjust="spacingAndGlyphs">GB70-</text>
<text x="681" y="382.52" font-size="5.8" fill="#ffff00" font-weight="normal" textLength="27" lengthAdjust="spacingAndGlyphs">M? 36xx</text>
<text x="720" y="382.52" font-size="5.8" fill="#ffff00" font-weight="normal" textLength="4" lengthAdjust="spacingAndGlyphs">2</text>
<text x="727.5" y="382.52" font-size="5.8" fill="#ffff00" font-weight="normal" textLength="8.5" lengthAdjust="spacingAndGlyphs">65</text>
<text x="758.5" y="382.52" font-size="5.8" fill="#ffff00" font-weight="normal" textLength="8.5" lengthAdjust="spacingAndGlyphs">0.07</text>
<text x="768" y="382.52" font-size="5.8" fill="#ffff00" font-weight="normal" textLength="10.6" lengthAdjust="spacingAndGlyphs">0.07</text>
<line x1="636.5" y1="383.5" x2="795.5" y2="383.5" stroke="#ffff00"/>
<text x="638" y="388.71" font-size="5.8" fill="#ffff00" font-weight="normal" textLength="6" lengthAdjust="spacingAndGlyphs">16</text>
<text x="681" y="388.71" font-size="5.8" fill="#ffff00" font-weight="normal" textLength="36" lengthAdjust="spacingAndGlyphs">M? 36xxxxx</text>
<text x="720" y="388.71" font-size="5.8" fill="#ffff00" font-weight="normal" textLength="4" lengthAdjust="spacingAndGlyphs">1</text>
<text x="727.5" y="388.71" font-size="5.8" fill="#ffff00" font-weight="normal" textLength="35.5" lengthAdjust="spacingAndGlyphs">65Mnxxxxxx</text>
<text x="768" y="388.71" font-size="5.8" fill="#ffff00" font-weight="normal" textLength="10.6" lengthAdjust="spacingAndGlyphs">0.07</text>
<text x="779" y="388.71" font-size="5.8" fill="#ffff00" font-weight="normal" textLength="5" lengthAdjust="spacingAndGlyphs">??</text>
<line x1="636.5" y1="389.5" x2="795.5" y2="389.5" stroke="#ffff00"/>
<text x="638" y="394.9" font-size="5.8" fill="#ffff00" font-weight="normal" textLength="6" lengthAdjust="spacingAndGlyphs">15</text>
<text x="645.5" y="394.9" font-size="5.8" fill="#ffff00" font-weight="normal" textLength="23.5" lengthAdjust="spacingAndGlyphs">GB70-8</text>
<text x="681" y="394.9" font-size="5.8" fill="#ffff00" font-weight="normal" textLength="15" lengthAdjust="spacingAndGlyphs">M? 3</text>
<text x="720" y="394.9" font-size="5.8" fill="#ffff00" font-weight="normal" textLength="4" lengthAdjust="spacingAndGlyphs">1</text>
<text x="727.5" y="394.9" font-size="5.8" fill="#ffff00" font-weight="normal" textLength="14.5" lengthAdjust="spacingAndGlyphs">65Mn</text>
<text x="768" y="394.9" font-size="5.8" fill="#ffff00" font-weight="normal" textLength="8.6" lengthAdjust="spacingAndGlyphs">0.07</text>
<line x1="636.5" y1="396.5" x2="795.5" y2="396.5" stroke="#ffff00"/>
<text x="638" y="401.09" font-size="5.8" fill="#ffff00" font-weight="normal" textLength="6" lengthAdjust="spacingAndGlyphs">14</text>
<text x="645.5" y="401.09" font-size="5.8" fill="#ffff00" font-weight="normal" textLength="30.5" lengthAdjust="spacingAndGlyphs">GB70-87x</text>
<text x="681" y="401.09" font-size="5.8" fill="#ffff00" font-weight="normal" textLength="29.6" lengthAdjust="spacingAndGlyphs">M? 36xxx</text>
<text x="720" y="401.09" font-size="5.8" fill="#ffff00" font-weight="normal" textLength="4" lengthAdjust="spacingAndGlyphs">1</text>
<text x="727.5" y="401.09" font-size="5.8" fill="#ffff00" font-weight="normal" textLength="6.5" lengthAdjust="spacingAndGlyphs">65</text>
<text x="768" y="401.09" font-size="5.8" fill="#ffff00" font-weight="normal" textLength="10.6" lengthAdjust="spacingAndGlyphs">0.07</text>
<line x1="636.5" y1="402.5" x2="795.5" y2="402.5" stroke="#ffff00"/>
<text x="638" y="407.28" font-size="5.8" fill="#ffff00" font-weight="normal" textLength="6" lengthAdjust="spacingAndGlyphs">13</text>
<text x="645.5" y="407.28" font-size="5.8" fill="#ffff00" font-weight="normal" textLength="29.5" lengthAdjust="spacingAndGlyphs">GB70-87x</text>
<text x="681" y="407.28" font-size="5.8" fill="#ffff00" font-weight="normal" textLength="20" lengthAdjust="spacingAndGlyphs">M? 36</text>
<text x="720" y="407.28" font-size="5.8" fill="#ffff00" font-weight="normal" textLength="4" lengthAdjust="spacingAndGlyphs">1</text>
<text x="727.5" y="407.28" font-size="5.8" fill="#ffff00" font-weight="normal" textLength="3.5" lengthAdjust="spacingAndGlyphs">65</text>
<text x="768" y="407.28" font-size="5.8" fill="#ffff00" font-weight="normal" textLength="10.6" lengthAdjust="spacingAndGlyphs">0.07</text>
<line x1="636.5" y1="408.5" x2="795.5" y2="408.5" stroke="#ffff00"/>
<text x="638" y="413.47" font-size="5.8" fill="#ffff00" font-weight="normal" textLength="6" lengthAdjust="spacingAndGlyphs">12</text>
<text x="645.5" y="413.47" font-size="5.8" fill="#ffff00" font-weight="normal" textLength="29.5" lengthAdjust="spacingAndGlyphs">GB70-87x</text>
<text x="681" y="413.47" font-size="5.8" fill="#ffff00" font-weight="normal" textLength="5" lengthAdjust="spacingAndGlyphs">M</text>
<text x="720" y="413.47" font-size="5.8" fill="#ffff00" font-weight="normal" textLength="4" lengthAdjust="spacingAndGlyphs">1</text>
<text x="727.5" y="413.47" font-size="5.8" fill="#ffff00" font-weight="normal" textLength="7.5" lengthAdjust="spacingAndGlyphs">65</text>
<text x="768" y="413.47" font-size="5.8" fill="#ffff00" font-weight="normal" textLength="10.6" lengthAdjust="spacingAndGlyphs">0.07</text>
<line x1="636.5" y1="414.5" x2="795.5" y2="414.5" stroke="#ffff00"/>
<text x="638" y="419.66" font-size="5.8" fill="#ffff00" font-weight="normal" textLength="6" lengthAdjust="spacingAndGlyphs">11</text>
<text x="645.5" y="419.66" font-size="5.8" fill="#ffff00" font-weight="normal" textLength="30.5" lengthAdjust="spacingAndGlyphs">GB70-87x</text>
<text x="681" y="419.66" font-size="5.8" fill="#ffff00" font-weight="normal" textLength="18" lengthAdjust="spacingAndGlyphs">M? 3</text>
<text x="720" y="419.66" font-size="5.8" fill="#ffff00" font-weight="normal" textLength="4" lengthAdjust="spacingAndGlyphs">4</text>
<text x="727.5" y="419.66" font-size="5.8" fill="#ffff00" font-weight="normal" textLength="3.5" lengthAdjust="spacingAndGlyphs">65</text>
<text x="758.5" y="419.66" font-size="5.8" fill="#ffff00" font-weight="normal" textLength="8.5" lengthAdjust="spacingAndGlyphs">0.07</text>
<text x="768" y="419.66" font-size="5.8" fill="#ffff00" font-weight="normal" textLength="10.6" lengthAdjust="spacingAndGlyphs">0.07</text>
<line x1="636.5" y1="420.5" x2="795.5" y2="420.5" stroke="#ffff00"/>
<text x="638" y="425.85" font-size="5.8" fill="#ffff00" font-weight="normal" textLength="6" lengthAdjust="spacingAndGlyphs">10</text>
<text x="645.5" y="425.85" font-size="5.8" fill="#ffff00" font-weight="normal" textLength="29.5" lengthAdjust="spacingAndGlyphs">GB70-87x</text>
<text x="681" y="425.85" font-size="5.8" fill="#ffff00" font-weight="normal" textLength="11" lengthAdjust="spacingAndGlyphs">M?</text>
<text x="720" y="425.85" font-size="5.8" fill="#ffff00" font-weight="normal" textLength="4" lengthAdjust="spacingAndGlyphs">4</text>
<text x="727.5" y="425.85" font-size="5.8" fill="#ffff00" font-weight="normal" textLength="6.5" lengthAdjust="spacingAndGlyphs">65</text>
<text x="758.5" y="425.85" font-size="5.8" fill="#ffff00" font-weight="normal" textLength="8.5" lengthAdjust="spacingAndGlyphs">0.07</text>
<text x="768" y="425.85" font-size="5.8" fill="#ffff00" font-weight="normal" textLength="10.6" lengthAdjust="spacingAndGlyphs">0.07</text>
<text x="779" y="425.85" font-size="5.8" fill="#ffff00" font-weight="normal" textLength="9" lengthAdjust="spacingAndGlyphs">??</text>
<line x1="636.5" y1="427.5" x2="795.5" y2="427.5" stroke="#ffff00"/>
<text x="638" y="432.04" font-size="5.8" fill="#ffff00" font-weight="normal" textLength="6" lengthAdjust="spacingAndGlyphs">9</text>
<text x="645.5" y="432.04" font-size="5.8" fill="#ffff00" font-weight="normal" textLength="29.5" lengthAdjust="spacingAndGlyphs">GB70-87x</text>
<text x="681" y="432.04" font-size="5.8" fill="#ffff00" font-weight="normal" textLength="8" lengthAdjust="spacingAndGlyphs">M?</text>
<text x="719" y="432.04" font-size="5.8" fill="#ffff00" font-weight="normal" textLength="6" lengthAdjust="spacingAndGlyphs">12</text>
<text x="727.5" y="432.04" font-size="5.8" fill="#ffff00" font-weight="normal" textLength="15.5" lengthAdjust="spacingAndGlyphs">65Mn</text>
<text x="768" y="432.04" font-size="5.8" fill="#ffff00" font-weight="normal" textLength="10.6" lengthAdjust="spacingAndGlyphs">0.07</text>
<text x="779" y="432.04" font-size="5.8" fill="#ffff00" font-weight="normal" textLength="9" lengthAdjust="spacingAndGlyphs">??</text>
<line x1="636.5" y1="433.5" x2="795.5" y2="433.5" stroke="#ffff00"/>
<text x="638" y="438.23" font-size="5.8" fill="#ffff00" font-weight="normal" textLength="6" lengthAdjust="spacingAndGlyphs">8</text>
<text x="645.5" y="438.23" font-size="5.8" fill="#ffff00" font-weight="normal" textLength="28.5" lengthAdjust="spacingAndGlyphs">GB70-87x</text>
<text x="681" y="438.23" font-size="5.8" fill="#ffff00" font-weight="normal" textLength="5" lengthAdjust="spacingAndGlyphs">M</text>
<text x="720" y="438.23" font-size="5.8" fill="#ffff00" font-weight="normal" textLength="4" lengthAdjust="spacingAndGlyphs">1</text>
<text x="727.5" y="438.23" font-size="5.8" fill="#ffff00" font-weight="normal" textLength="26.2" lengthAdjust="spacingAndGlyphs">65Mnxxx</text>
<text x="768" y="438.23" font-size="5.8" fill="#ffff00" font-weight="normal" textLength="10.6" lengthAdjust="spacingAndGlyphs">0.07</text>
<text x="779" y="438.23" font-size="5.8" fill="#ffff00" font-weight="normal" textLength="9" lengthAdjust="spacingAndGlyphs">??</text>
<line x1="636.5" y1="439.5" x2="795.5" y2="439.5" stroke="#ffff00"/>
<text x="638" y="444.42" font-size="5.8" fill="#ffff00" font-weight="normal" textLength="6" lengthAdjust="spacingAndGlyphs">7</text>
<text x="645.5" y="444.42" font-size="5.8" fill="#ffff00" font-weight="normal" textLength="29.5" lengthAdjust="spacingAndGlyphs">GB70-87x</text>
<text x="681" y="444.42" font-size="5.8" fill="#ffff00" font-weight="normal" textLength="18" lengthAdjust="spacingAndGlyphs">M? 3</text>
<text x="720" y="444.42" font-size="5.8" fill="#ffff00" font-weight="normal" textLength="4" lengthAdjust="spacingAndGlyphs">1</text>
<text x="727.5" y="444.42" font-size="5.8" fill="#ffff00" font-weight="normal" textLength="6.5" lengthAdjust="spacingAndGlyphs">65</text>
<text x="768" y="444.42" font-size="5.8" fill="#ffff00" font-weight="normal" textLength="10.6" lengthAdjust="spacingAndGlyphs">0.07</text>
<text x="779" y="444.42" font-size="5.8" fill="#ffff00" font-weight="normal" textLength="9" lengthAdjust="spacingAndGlyphs">??</text>
<line x1="636.5" y1="445.5" x2="795.5" y2="445.5" stroke="#ffff00"/>
<text x="638" y="450.61" font-size="5.8" fill="#ffff00" font-weight="normal" textLength="6" lengthAdjust="spacingAndGlyphs">6</text>
<text x="645.5" y="450.61" font-size="5.8" fill="#ffff00" font-weight="normal" textLength="28.5" lengthAdjust="spacingAndGlyphs">GB70-87x</text>
<text x="681" y="450.61" font-size="5.8" fill="#ffff00" font-weight="normal" textLength="5" lengthAdjust="spacingAndGlyphs">M</text>
<text x="720" y="450.61" font-size="5.8" fill="#ffff00" font-weight="normal" textLength="4" lengthAdjust="spacingAndGlyphs">1</text>
<text x="727.5" y="450.61" font-size="5.8" fill="#ffff00" font-weight="normal" textLength="6.5" lengthAdjust="spacingAndGlyphs">65</text>
<text x="768" y="450.61" font-size="5.8" fill="#ffff00" font-weight="normal" textLength="10.6" lengthAdjust="spacingAndGlyphs">0.07</text>
<text x="779" y="450.61" font-size="5.8" fill="#ffff00" font-weight="normal" textLength="9" lengthAdjust="spacingAndGlyphs">??</text>
<line x1="636.5" y1="451.5" x2="795.5" y2="451.5" stroke="#ffff00"/>
<text x="638" y="456.8" font-size="5.8" fill="#ffff00" font-weight="normal" textLength="6" lengthAdjust="spacingAndGlyphs">5</text>
<text x="645.5" y="456.8" font-size="5.8" fill="#ffff00" font-weight="normal" textLength="30.5" lengthAdjust="spacingAndGlyphs">GB70-87x</text>
<text x="681" y="456.8" font-size="5.8" fill="#ffff00" font-weight="normal" textLength="3" lengthAdjust="spacingAndGlyphs">M</text>
<text x="720" y="456.8" font-size="5.8" fill="#ffff00" font-weight="normal" textLength="4" lengthAdjust="spacingAndGlyphs">1</text>
<text x="727.5" y="456.8" font-size="5.8" fill="#ffff00" font-weight="normal" textLength="8.5" lengthAdjust="spacingAndGlyphs">65</text>
<text x="768" y="456.8" font-size="5.8" fill="#ffff00" font-weight="normal" textLength="10.6" lengthAdjust="spacingAndGlyphs">0.07</text>
<line x1="636.5" y1="457.5" x2="795.5" y2="457.5" stroke="#ffff00"/>
<text x="638" y="462.99" font-size="5.8" fill="#ffff00" font-weight="normal" textLength="6" lengthAdjust="spacingAndGlyphs">4</text>
<text x="645.5" y="462.99" font-size="5.8" fill="#ffff00" font-weight="normal" textLength="20.1" lengthAdjust="spacingAndGlyphs">GB70-</text>
<text x="681" y="462.99" font-size="5.8" fill="#ffff00" font-weight="normal" textLength="11" lengthAdjust="spacingAndGlyphs">M?</text>
<text x="719" y="462.99" font-size="5.8" fill="#ffff00" font-weight="normal" textLength="6" lengthAdjust="spacingAndGlyphs">24</text>
<text x="727.5" y="462.99" font-size="5.8" fill="#ffff00" font-weight="normal" textLength="12.5" lengthAdjust="spacingAndGlyphs">65M</text>
<text x="758.5" y="462.99" font-size="5.8" fill="#ffff00" font-weight="normal" textLength="8.5" lengthAdjust="spacingAndGlyphs">0.07</text>
<text x="768" y="462.99" font-size="5.8" fill="#ffff00" font-weight="normal" textLength="10.6" lengthAdjust="spacingAndGlyphs">0.07</text>
<line x1="636.5" y1="464.5" x2="795.5" y2="464.5" stroke="#ffff00"/>
<text x="638" y="469.18" font-size="5.8" fill="#ffff00" font-weight="normal" textLength="6" lengthAdjust="spacingAndGlyphs">3</text>
<text x="645.5" y="469.18" font-size="5.8" fill="#ffff00" font-weight="normal" textLength="25.5" lengthAdjust="spacingAndGlyphs">GB70-87</text>
<text x="681" y="469.18" font-size="5.8" fill="#ffff00" font-weight="normal" textLength="24" lengthAdjust="spacingAndGlyphs">M? 36x</text>
<text x="719" y="469.18" font-size="5.8" fill="#ffff00" font-weight="normal" textLength="6" lengthAdjust="spacingAndGlyphs">24</text>
<text x="727.5" y="469.18" font-size="5.8" fill="#ffff00" font-weight="normal" textLength="6.5" lengthAdjust="spacingAndGlyphs">65</text>
<text x="758.5" y="469.18" font-size="5.8" fill="#ffff00" font-weight="normal" textLength="8.5" lengthAdjust="spacingAndGlyphs">0.07</text>
<text x="768" y="469.18" font-size="5.8" fill="#ffff00" font-weight="normal" textLength="10.6" lengthAdjust="spacingAndGlyphs">0.07</text>
<line x1="636.5" y1="470.5" x2="795.5" y2="470.5" stroke="#ffff00"/>
<text x="638" y="475.37" font-size="5.8" fill="#ffff00" font-weight="normal" textLength="6" lengthAdjust="spacingAndGlyphs">2</text>
<text x="645.5" y="475.37" font-size="5.8" fill="#ffff00" font-weight="normal" textLength="23" lengthAdjust="spacingAndGlyphs">GB70-8</text>
<text x="681" y="475.37" font-size="5.8" fill="#ffff00" font-weight="normal" textLength="5" lengthAdjust="spacingAndGlyphs">M</text>
<text x="719" y="475.37" font-size="5.8" fill="#ffff00" font-weight="normal" textLength="6" lengthAdjust="spacingAndGlyphs">24</text>
<text x="727.5" y="475.37" font-size="5.8" fill="#ffff00" font-weight="normal" textLength="14.5" lengthAdjust="spacingAndGlyphs">65Mn</text>
<text x="758.5" y="475.37" font-size="5.8" fill="#ffff00" font-weight="normal" textLength="8.5" lengthAdjust="spacingAndGlyphs">0.07</text>
<text x="768" y="475.37" font-size="5.8" fill="#ffff00" font-weight="normal" textLength="10.6" lengthAdjust="spacingAndGlyphs">0.07</text>
<text x="779" y="475.37" font-size="5.8" fill="#ffff00" font-weight="normal" textLength="9" lengthAdjust="spacingAndGlyphs">??</text>
<line x1="636.5" y1="476.5" x2="795.5" y2="476.5" stroke="#ffff00"/>
<text x="638" y="481.56" font-size="5.8" fill="#ffff00" font-weight="normal" textLength="6" lengthAdjust="spacingAndGlyphs">1</text>
<text x="645.5" y="481.56" font-size="5.8" fill="#ffff00" font-weight="normal" textLength="33.5" lengthAdjust="spacingAndGlyphs">GB70-87xx</text>
<text x="681" y="481.56" font-size="5.8" fill="#ffff00" font-weight="normal" textLength="24" lengthAdjust="spacingAndGlyphs">M? 36x</text>
<text x="719" y="481.56" font-size="5.8" fill="#ffff00" font-weight="normal" textLength="6" lengthAdjust="spacingAndGlyphs">14</text>
<text x="727.5" y="481.56" font-size="5.8" fill="#ffff00" font-weight="normal" textLength="6.5" lengthAdjust="spacingAndGlyphs">65</text>
<text x="758.5" y="481.56" font-size="5.8" fill="#ffff00" font-weight="normal" textLength="8.5" lengthAdjust="spacingAndGlyphs">0.07</text>
<text x="768" y="481.56" font-size="5.8" fill="#ffff00" font-weight="normal" textLength="10.6" lengthAdjust="spacingAndGlyphs">0.07</text>
<line x1="636.5" y1="482.5" x2="795.5" y2="482.5" stroke="#ffff00"/>
<line x1="636.5" y1="494.5" x2="795.5" y2="494.5" stroke="#ffffff"/>
<line x1="636.5" y1="328" x2="636.5" y2="494.5" stroke="#ffffff"/>
<line x1="644.5" y1="328" x2="644.5" y2="494.5" stroke="#ffffff"/>
<line x1="679.5" y1="328" x2="679.5" y2="494.5" stroke="#ffffff"/>
<line x1="718.5" y1="328" x2="718.5" y2="494.5" stroke="#ffffff"/>
<line x1="725.5" y1="328" x2="725.5" y2="494.5" stroke="#ffffff"/>
<line x1="758.5" y1="328" x2="758.5" y2="494.5" stroke="#ffffff"/>
<line x1="767.5" y1="328" x2="767.5" y2="494.5" stroke="#ffffff"/>
<line x1="759.5" y1="488.5" x2="795.5" y2="488.5" stroke="#ffffff"/>
<text transform="translate(642,493) rotate(-90)" x="0" y="0" font-size="5.8" fill="#ffff00" font-weight="normal" textLength="8.5" lengthAdjust="spacingAndGlyphs">§</text>
<text x="650" y="491" font-size="7.25" fill="#ffff00" font-weight="normal" textLength="4" lengthAdjust="spacingAndGlyphs">?</text>
<text x="672" y="491" font-size="7.25" fill="#ffff00" font-weight="normal" textLength="4" lengthAdjust="spacingAndGlyphs">?</text>
<text x="684" y="491" font-size="7.25" fill="#ffff00" font-weight="normal" textLength="4" lengthAdjust="spacingAndGlyphs">?</text>
<text x="711" y="491" font-size="7.25" fill="#ffff00" font-weight="normal" textLength="4" lengthAdjust="spacingAndGlyphs">?</text>
<text x="730" y="491" font-size="7.25" fill="#ffff00" font-weight="normal" textLength="4" lengthAdjust="spacingAndGlyphs">?</text>
<text x="752" y="491" font-size="7.25" fill="#ffff00" font-weight="normal" textLength="4" lengthAdjust="spacingAndGlyphs">?</text>
<text x="760" y="488" font-size="7.25" fill="#ffff00" font-weight="normal" textLength="6" lengthAdjust="spacingAndGlyphs">?</text>
<text x="769" y="488" font-size="7.25" fill="#ffff00" font-weight="normal" textLength="6" lengthAdjust="spacingAndGlyphs">?</text>
<text x="760" y="494" font-size="7.25" fill="#ffff00" font-weight="normal" textLength="5" lengthAdjust="spacingAndGlyphs">?</text>
<text x="770" y="494" font-size="7.25" fill="#ffff00" font-weight="normal" textLength="4" lengthAdjust="spacingAndGlyphs">?</text>
<text x="776" y="492" font-size="8.7" fill="#ffff00" font-weight="normal" textLength="4" lengthAdjust="spacingAndGlyphs">?</text>
<text x="787" y="492" font-size="8.7" fill="#ffff00" font-weight="normal" textLength="4" lengthAdjust="spacingAndGlyphs">?</text>
<text transform="translate(724,493) rotate(-90)" x="0" y="0" font-size="5.8" fill="#ffff00" font-weight="normal" textLength="8.5" lengthAdjust="spacingAndGlyphs">§</text>
<line x1="478.5" y1="491.5" x2="636.5" y2="491.5" stroke="#ffff00"/>
<text x="479" y="496.9" font-size="5.8" fill="#ffff00" font-weight="normal" textLength="6" lengthAdjust="spacingAndGlyphs">30</text>
<text x="486.4" y="496.9" font-size="5.8" fill="#ffff00" font-weight="normal" textLength="26.9" lengthAdjust="spacingAndGlyphs">GB/T578</text>
<text x="521.9" y="496.9" font-size="5.8" fill="#ffff00" font-weight="normal" textLength="2.9" lengthAdjust="spacingAndGlyphs">M</text>
<text x="561.5" y="496.9" font-size="5.8" fill="#ffff00" font-weight="normal" textLength="3.5" lengthAdjust="spacingAndGlyphs">1</text>
<text x="568.8" y="496.9" font-size="5.8" fill="#ffff00" font-weight="normal" textLength="8.6" lengthAdjust="spacingAndGlyphs">Q2</text>
<text x="609" y="496.9" font-size="5.8" fill="#ffff00" font-weight="normal" textLength="10.5" lengthAdjust="spacingAndGlyphs">0.4</text>
<line x1="478.5" y1="498.5" x2="636.5" y2="498.5" stroke="#ffff00"/>
<text x="479" y="503.09" font-size="5.8" fill="#ffff00" font-weight="normal" textLength="6" lengthAdjust="spacingAndGlyphs">29</text>
<text x="486.4" y="503.09" font-size="5.8" fill="#ffff00" font-weight="normal" textLength="21.6" lengthAdjust="spacingAndGlyphs">GB/T57</text>
<text x="521.9" y="503.09" font-size="5.8" fill="#ffff00" font-weight="normal" textLength="23.9" lengthAdjust="spacingAndGlyphs">M10x25</text>
<text x="561.5" y="503.09" font-size="5.8" fill="#ffff00" font-weight="normal" textLength="3.5" lengthAdjust="spacingAndGlyphs">2</text>
<text x="568.8" y="503.09" font-size="5.8" fill="#ffff00" font-weight="normal" textLength="4.8" lengthAdjust="spacingAndGlyphs">Q2</text>
<text x="600.4" y="503.09" font-size="5.8" fill="#ffff00" font-weight="normal" textLength="8.6" lengthAdjust="spacingAndGlyphs">0.4</text>
<text x="609" y="503.09" font-size="5.8" fill="#ffff00" font-weight="normal" textLength="10.5" lengthAdjust="spacingAndGlyphs">0.4</text>
<line x1="478.5" y1="504.5" x2="636.5" y2="504.5" stroke="#ffff00"/>
<text x="479" y="509.28" font-size="5.8" fill="#ffff00" font-weight="normal" textLength="6" lengthAdjust="spacingAndGlyphs">28</text>
<text x="486.4" y="509.28" font-size="5.8" fill="#ffff00" font-weight="normal" textLength="19.2" lengthAdjust="spacingAndGlyphs">GB/T5</text>
<text x="521.9" y="509.28" font-size="5.8" fill="#ffff00" font-weight="normal" textLength="18.1" lengthAdjust="spacingAndGlyphs">M10x2</text>
<text x="561.5" y="509.28" font-size="5.8" fill="#ffff00" font-weight="normal" textLength="3.5" lengthAdjust="spacingAndGlyphs">1</text>
<text x="568.8" y="509.28" font-size="5.8" fill="#ffff00" font-weight="normal" textLength="18.2" lengthAdjust="spacingAndGlyphs">Q235-</text>
<text x="609" y="509.28" font-size="5.8" fill="#ffff00" font-weight="normal" textLength="10.5" lengthAdjust="spacingAndGlyphs">0.4</text>
<line x1="478.5" y1="510.5" x2="636.5" y2="510.5" stroke="#ffff00"/>
<text x="479" y="515.47" font-size="5.8" fill="#ffff00" font-weight="normal" textLength="6" lengthAdjust="spacingAndGlyphs">27</text>
<text x="486.4" y="515.47" font-size="5.8" fill="#ffff00" font-weight="normal" textLength="26.9" lengthAdjust="spacingAndGlyphs">GB/T578</text>
<text x="521.9" y="515.47" font-size="5.8" fill="#ffff00" font-weight="normal" textLength="9.6" lengthAdjust="spacingAndGlyphs">M1</text>
<text x="561.5" y="515.47" font-size="5.8" fill="#ffff00" font-weight="normal" textLength="3.5" lengthAdjust="spacingAndGlyphs">4</text>
<text x="568.8" y="515.47" font-size="5.8" fill="#ffff00" font-weight="normal" textLength="18.2" lengthAdjust="spacingAndGlyphs">Q235-</text>
<text x="609" y="515.47" font-size="5.8" fill="#ffff00" font-weight="normal" textLength="10.5" lengthAdjust="spacingAndGlyphs">0.4</text>
<text x="620.5" y="515.47" font-size="5.8" fill="#ffff00" font-weight="normal" textLength="9.5" lengthAdjust="spacingAndGlyphs">??</text>
<line x1="478.5" y1="516.5" x2="636.5" y2="516.5" stroke="#ffff00"/>
<text x="479" y="521.66" font-size="5.8" fill="#ffff00" font-weight="normal" textLength="6" lengthAdjust="spacingAndGlyphs">26</text>
<text x="486.4" y="521.66" font-size="5.8" fill="#ffff00" font-weight="normal" textLength="26.9" lengthAdjust="spacingAndGlyphs">GB/T578</text>
<text x="521.9" y="521.66" font-size="5.8" fill="#ffff00" font-weight="normal" textLength="3.8" lengthAdjust="spacingAndGlyphs">M</text>
<text x="561.5" y="521.66" font-size="5.8" fill="#ffff00" font-weight="normal" textLength="3.5" lengthAdjust="spacingAndGlyphs">1</text>
<text x="568.8" y="521.66" font-size="5.8" fill="#ffff00" font-weight="normal" textLength="5.7" lengthAdjust="spacingAndGlyphs">Q2</text>
<text x="609" y="521.66" font-size="5.8" fill="#ffff00" font-weight="normal" textLength="10.5" lengthAdjust="spacingAndGlyphs">0.4</text>
<text x="620.5" y="521.66" font-size="5.8" fill="#ffff00" font-weight="normal" textLength="9.5" lengthAdjust="spacingAndGlyphs">??</text>
<line x1="478.5" y1="522.5" x2="636.5" y2="522.5" stroke="#ffffff"/>
<line x1="478.5" y1="491.9" x2="478.5" y2="534.5" stroke="#ffffff"/>
<line x1="485.5" y1="491.9" x2="485.5" y2="534.5" stroke="#ffffff"/>
<line x1="520.5" y1="491.9" x2="520.5" y2="534.5" stroke="#ffffff"/>
<line x1="559.5" y1="491.9" x2="559.5" y2="534.5" stroke="#ffffff"/>
<line x1="566.5" y1="491.9" x2="566.5" y2="534.5" stroke="#ffffff"/>
<line x1="599.5" y1="491.9" x2="599.5" y2="534.5" stroke="#ffffff"/>
<line x1="608.5" y1="491.9" x2="608.5" y2="534.5" stroke="#ffffff"/>
<line x1="619.5" y1="491.9" x2="619.5" y2="534.5" stroke="#ffffff"/>
<line x1="636.5" y1="491.9" x2="636.5" y2="534.5" stroke="#ffffff"/>
<line x1="599.5" y1="528.5" x2="620.5" y2="528.5" stroke="#ffffff"/>
<text transform="translate(483.5,533) rotate(-90)" x="0" y="0" font-size="5.8" fill="#ffff00" font-weight="normal" textLength="9" lengthAdjust="spacingAndGlyphs">§</text>
<text x="490" y="532" font-size="7.25" fill="#ffff00" font-weight="normal" textLength="4" lengthAdjust="spacingAndGlyphs">?</text>
<text x="512" y="532" font-size="7.25" fill="#ffff00" font-weight="normal" textLength="4" lengthAdjust="spacingAndGlyphs">?</text>
<text x="525" y="532" font-size="7.25" fill="#ffff00" font-weight="normal" textLength="4" lengthAdjust="spacingAndGlyphs">?</text>
<text x="551" y="532" font-size="7.25" fill="#ffff00" font-weight="normal" textLength="4" lengthAdjust="spacingAndGlyphs">?</text>
<text x="573" y="532" font-size="7.25" fill="#ffff00" font-weight="normal" textLength="4" lengthAdjust="spacingAndGlyphs">?</text>
<text x="592" y="532" font-size="7.25" fill="#ffff00" font-weight="normal" textLength="4" lengthAdjust="spacingAndGlyphs">?</text>
<text x="600" y="528" font-size="5.8" fill="#ffff00" font-weight="normal" textLength="6" lengthAdjust="spacingAndGlyphs">?</text>
<text x="609" y="528" font-size="5.8" fill="#ffff00" font-weight="normal" textLength="5" lengthAdjust="spacingAndGlyphs">?</text>
<text x="601" y="534" font-size="7.25" fill="#ffff00" font-weight="normal" textLength="4" lengthAdjust="spacingAndGlyphs">?</text>
<text x="612" y="534" font-size="7.25" fill="#ffff00" font-weight="normal" textLength="4" lengthAdjust="spacingAndGlyphs">?</text>
<text x="622" y="533" font-size="8.7" fill="#ffff00" font-weight="normal" textLength="4" lengthAdjust="spacingAndGlyphs">?</text>
<text x="632" y="533" font-size="8.7" fill="#ffff00" font-weight="normal" textLength="4" lengthAdjust="spacingAndGlyphs">?</text>
<text transform="translate(565,533) rotate(-90)" x="0" y="0" font-size="5.8" fill="#ffff00" font-weight="normal" textLength="9" lengthAdjust="spacingAndGlyphs">§</text>
<line x1="689.5" y1="494.5" x2="689.5" y2="534.5" stroke="#ffffff"/>
<line x1="742.5" y1="494.5" x2="742.5" y2="534.5" stroke="#ffffff"/>
<line x1="637.5" y1="498.5" x2="689.5" y2="498.5" stroke="#00ff00"/>
<line x1="637.5" y1="502.5" x2="689.5" y2="502.5" stroke="#00ff00"/>
<line x1="637.5" y1="505.5" x2="689.5" y2="505.5" stroke="#00ff00"/>
<line x1="637.5" y1="509.5" x2="689.5" y2="509.5" stroke="#00ff00"/>
<line x1="637.5" y1="512.5" x2="689.5" y2="512.5" stroke="#ffffff"/>
<line x1="637.5" y1="518.5" x2="689.5" y2="518.5" stroke="#00ff00"/>
<line x1="637.5" y1="530.5" x2="689.5" y2="530.5" stroke="#00ff00"/>
<line x1="637.5" y1="524.5" x2="742.5" y2="524.5" stroke="#00ff00"/>
<line x1="644.5" y1="494.5" x2="644.5" y2="512.8" stroke="#00ff00"/>
<line x1="651.5" y1="494.5" x2="651.5" y2="512.8" stroke="#00ff00"/>
<line x1="667.5" y1="494.5" x2="667.5" y2="512.8" stroke="#00ff00"/>
<line x1="682.5" y1="494.5" x2="682.5" y2="512.8" stroke="#00ff00"/>
<line x1="654.5" y1="512.8" x2="654.5" y2="534.5" stroke="#00ff00"/>
<line x1="667.5" y1="512.8" x2="667.5" y2="534.5" stroke="#00ff00"/>
<line x1="682.5" y1="512.8" x2="682.5" y2="534.5" stroke="#00ff00"/>
<line x1="742.5" y1="508.5" x2="795.5" y2="508.5" stroke="#ffffff"/>
<line x1="742.5" y1="524.5" x2="795.5" y2="524.5" stroke="#ffffff"/>
<line x1="742.5" y1="513.5" x2="795.5" y2="513.5" stroke="#00ff00"/>
<line x1="742.5" y1="518.5" x2="795.5" y2="518.5" stroke="#00ff00"/>
<line x1="766.5" y1="509" x2="766.5" y2="524.2" stroke="#00ff00"/>
<text class="big" x="699" y="515" font-size="18.85" fill="#ffff00" font-weight="normal" textLength="33" lengthAdjust="spacingAndGlyphs">2#???</text>
<text class="big" x="707" y="532" font-size="10.15" fill="#ffff00" font-weight="normal" textLength="13" lengthAdjust="spacingAndGlyphs">???</text>
<text class="big" x="745" y="506" font-size="11.6" fill="#ffff00" font-weight="normal" textLength="47" lengthAdjust="spacingAndGlyphs">HY25808.2.00</text>
<text class="big" x="744" y="533" font-size="10.15" fill="#ffff00" font-weight="normal" textLength="44" lengthAdjust="spacingAndGlyphs">?????????</text>
<text x="638" y="513" font-size="5.8" fill="#ffff00" font-weight="normal" textLength="5" lengthAdjust="spacingAndGlyphs">''</text>
<text x="646" y="513" font-size="5.8" fill="#ffff00" font-weight="normal" textLength="6" lengthAdjust="spacingAndGlyphs">??</text>
<text x="655" y="513" font-size="7.25" fill="#ffff00" font-weight="normal" textLength="12" lengthAdjust="spacingAndGlyphs">L?? ?</text>
<text x="671" y="513" font-size="5.8" fill="#ffff00" font-weight="normal" textLength="6" lengthAdjust="spacingAndGlyphs">? ?</text>
<text x="684" y="513" font-size="5.8" fill="#ffff00" font-weight="normal" textLength="6" lengthAdjust="spacingAndGlyphs">??</text>
<text x="640" y="518" font-size="5.8" fill="#ffff00" font-weight="normal" textLength="5" lengthAdjust="spacingAndGlyphs">?</text>
<text x="647" y="518" font-size="5.8" fill="#ffff00" font-weight="normal" textLength="4" lengthAdjust="spacingAndGlyphs">?</text>
<text x="656" y="518" font-size="5.8" fill="#ffff00" font-weight="normal" textLength="10" lengthAdjust="spacingAndGlyphs">???</text>
<text x="670" y="518" font-size="5.8" fill="#ffff00" font-weight="normal" textLength="4" lengthAdjust="spacingAndGlyphs">?</text>
<text x="680" y="518" font-size="5.8" fill="#ffff00" font-weight="normal" textLength="3" lengthAdjust="spacingAndGlyphs">:</text>
<text x="640" y="524" font-size="7.25" fill="#ffff00" font-weight="normal" textLength="11" lengthAdjust="spacingAndGlyphs">??/??</text>
<text x="670" y="524" font-size="7.25" fill="#ffff00" font-weight="normal" textLength="9" lengthAdjust="spacingAndGlyphs">???</text>
<text x="639" y="530" font-size="7.25" fill="#ffff00" font-weight="normal" textLength="13" lengthAdjust="spacingAndGlyphs">????</text>
<text x="670" y="530" font-size="7.25" fill="#ffff00" font-weight="normal" textLength="4" lengthAdjust="spacingAndGlyphs">?</text>
<text x="680" y="530" font-size="7.25" fill="#ffff00" font-weight="normal" textLength="3" lengthAdjust="spacingAndGlyphs">:</text>
<text x="640" y="535" font-size="7.25" fill="#ffff00" font-weight="normal" textLength="4" lengthAdjust="spacingAndGlyphs">?</text>
<text x="657" y="535" font-size="7.25" fill="#ffff00" font-weight="normal" textLength="4" lengthAdjust="spacingAndGlyphs">?</text>
<text x="669" y="535" font-size="7.25" fill="#ffff00" font-weight="normal" textLength="4" lengthAdjust="spacingAndGlyphs">?</text>
<text x="679" y="535" font-size="7.25" fill="#ffff00" font-weight="normal" textLength="4" lengthAdjust="spacingAndGlyphs">?</text>
<text x="747" y="519" font-size="13.05" fill="#ffff00" font-weight="normal" textLength="4" lengthAdjust="spacingAndGlyphs">?</text>
<text x="769" y="516" font-size="10.15" fill="#ffff00" font-weight="normal" textLength="7" lengthAdjust="spacingAndGlyphs">??</text>
<text x="776" y="518" font-size="10.15" fill="#ffff00" font-weight="normal" textLength="5" lengthAdjust="spacingAndGlyphs">M</text>
<text x="784" y="515" font-size="8.7" fill="#ffff00" font-weight="normal" textLength="6" lengthAdjust="spacingAndGlyphs">?</text>
<text x="788" y="522" font-size="7.25" fill="#ffff00" font-weight="normal" textLength="5" lengthAdjust="spacingAndGlyphs">S</text>
<text x="791" y="514" font-size="8.7" fill="#ffff00" font-weight="normal" textLength="4" lengthAdjust="spacingAndGlyphs">?</text>
<text x="745" y="524" font-size="7.25" fill="#ffff00" font-weight="normal" textLength="6" lengthAdjust="spacingAndGlyphs">? ?</text>
<text x="752" y="524" font-size="7.25" fill="#ffff00" font-weight="normal" textLength="12" lengthAdjust="spacingAndGlyphs">? ? ?</text>
</g>
</svg>
</body></html>
